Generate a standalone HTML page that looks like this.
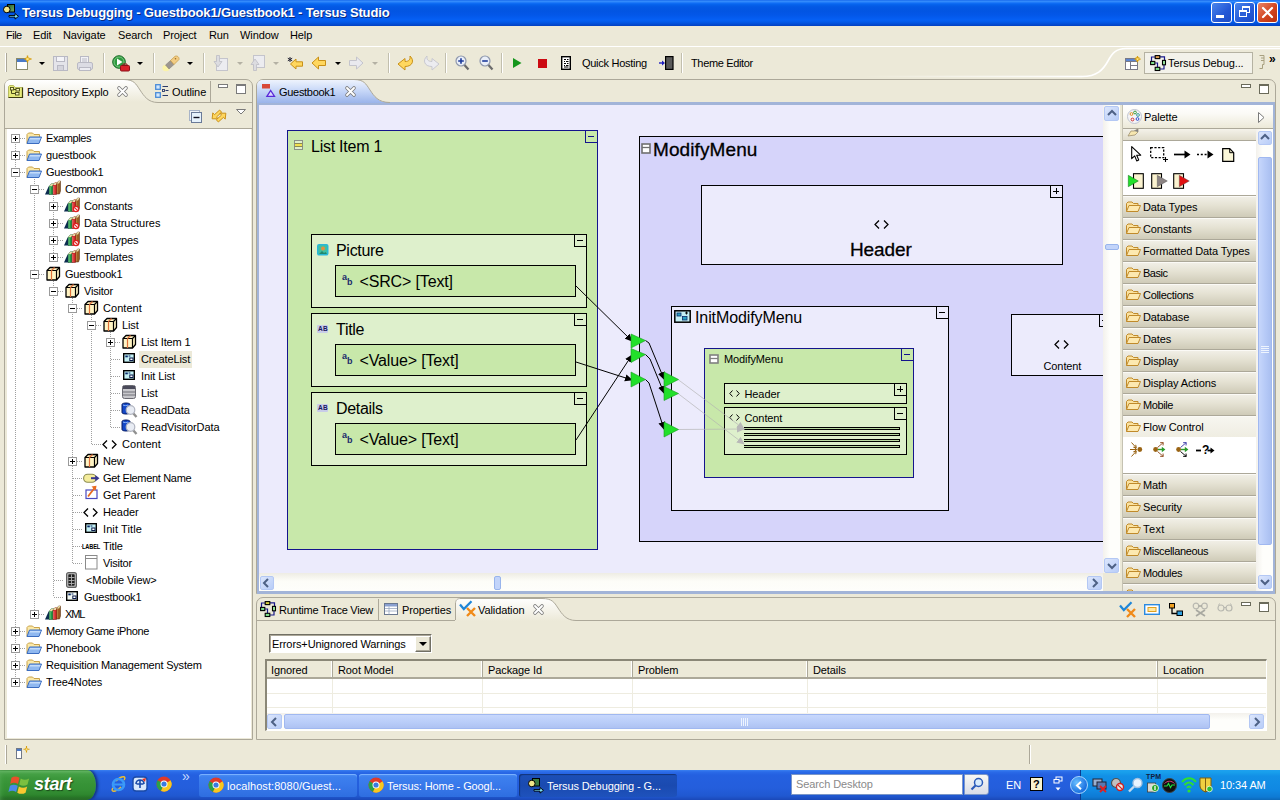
<!DOCTYPE html>
<html><head><meta charset="utf-8"><title>Tersus Debugging - Guestbook1/Guestbook1 - Tersus Studio</title>
<style>
*{box-sizing:border-box;margin:0;padding:0}
html,body{width:1280px;height:800px;overflow:hidden;background:#ece9d8}
body{position:relative;font-family:"Liberation Sans",sans-serif;font-size:11px;color:#000}
.a{position:absolute}
.t{position:absolute;white-space:nowrap;line-height:14px;height:14px;letter-spacing:-.1px}
svg{position:absolute;overflow:visible}
#title{left:0;top:0;width:1280px;height:26px;background:linear-gradient(#0a5ce8 0,#3a90fc 1px,#2a84fa 2px,#1470f6 3px,#0766f0 4px,#0560ea 5px,#0358e4 7px,#0255e2 11px,#0357e8 15px,#045cf0 18px,#0560f4 20px,#045ae8 22px,#034ed6 24px,#0340c0 26px)}
#title .tt{left:22px;top:4px;color:#fff;font-weight:bold;font-size:13px;line-height:18px;height:18px;text-shadow:1px 1px 0 #0a2a80;letter-spacing:-.15px}
.wb{top:2px;width:21px;height:21px;border:1px solid #fff;border-radius:3px;background:linear-gradient(135deg,#4a86ec,#2458d6 60%,#1d4cc4)}
.mi{top:28px;font-size:11px}
.sep{width:2px;height:20px;top:53px;border-left:1px solid #c2bfae;border-right:1px solid #fff}
.dd{width:0;height:0;border-left:3px solid transparent;border-right:3px solid transparent;border-top:3px solid #000;top:62px}
.dd.g{border-top-color:#b4b1a4}
.panel{border:1px solid #aca899;border-radius:7px 7px 0 0;background:#ece9d8}
.row{left:0;height:17px;width:243px}
.row .t{top:2px}
.exp{width:9px;height:9px;border:1px solid #9a9a9a;background:#fff;top:4px}
.exp i{position:absolute;left:1px;top:3px;width:5px;height:1px;background:#000}
.exp b{position:absolute;left:3px;top:1px;width:1px;height:5px;background:#000}
.drawer{left:0;width:133px;height:22px;background:linear-gradient(#f1efe6 0,#e4e1d2 45%,#cfcbb8 100%);border-top:1px solid #fbfaf6;border-bottom:1px solid #aca899}
.drawer .t{left:20px;top:3px}
.th{top:0;height:18px;border-right:1px solid #aca899;border-bottom:2px solid #aca899;background:#ece9d8;box-shadow:inset -1px 0 0 #fff}
.th .t{left:5px;top:2px}
.tb{top:774px;height:23px;border-radius:3px;color:#fff;font-size:11px}
</style></head><body>
<div class="a" id="title"><svg style="left:3px;top:3px" width="18" height="18" viewBox="0 0 18 18"><defs><linearGradient id="agr" x1="0" y1="0" x2="1" y2="1"><stop offset="0" stop-color="#1c5a24"/><stop offset="1" stop-color="#7ab070"/></linearGradient></defs><rect x="4.500" y="1.500" width="7" height="7.500" fill="url(#agr)" stroke="#000" stroke-width="1"/><circle cx="3.800" cy="6.500" r="3.300" fill="#f2e68a" stroke="#000" stroke-width="1"/><path d="M6 12.500h6v-2l3.500 2.800-3.500 2.800v-2h-6z" fill="#7adcf0" stroke="#000" stroke-width=".9"/></svg><div class="t tt">Tersus Debugging - Guestbook1/Guestbook1 - Tersus Studio</div><div class="a wb" style="left:1211px"><div class="a" style="left:4px;top:12px;width:8px;height:3px;background:#fff"></div></div><div class="a wb" style="left:1234px"><div class="a" style="left:7px;top:3px;width:8px;height:7px;border:1px solid #fff;border-top-width:2px"></div><div class="a" style="left:4px;top:7px;width:8px;height:7px;border:1px solid #fff;border-top-width:2px;background:#2c60d8"></div></div><div class="a wb" style="left:1257px;background:linear-gradient(135deg,#e88468,#d2451f 55%,#b8300e)"><svg style="left:3px;top:3px" width="13" height="13" viewBox="0 0 13 13"><path d="M2 2l9 9M11 2l-9 9" stroke="#fff" stroke-width="2.2" stroke-linecap="round"/></svg></div></div><div class="a" style="left:0;top:26px;width:1280px;height:20px;background:#ece9d8"></div><div class="t mi" style="left:6px;letter-spacing:-.5px">File</div><div class="t mi" style="left:33px">Edit</div><div class="t mi" style="left:63px">Navigate</div><div class="t mi" style="left:118px">Search</div><div class="t mi" style="left:163px">Project</div><div class="t mi" style="left:209px">Run</div><div class="t mi" style="left:240px">Window</div><div class="t mi" style="left:290px">Help</div><div class="a" style="left:0;top:46px;width:1280px;height:1px;background:#fff"></div><div class="a" style="left:0;top:47px;width:1280px;height:33px;background:#ece9d8"></div><svg style="left:860px;top:47px" width="420" height="33" viewBox="0 0 420 33"><defs><linearGradient id="fd" x1="0" y1="0" x2="1" y2="0"><stop offset="0" stop-color="#fff" stop-opacity="0"/><stop offset="1" stop-color="#fff"/></linearGradient></defs><rect x="0" y="28.700" width="222" height="1.600" fill="url(#fd)"/><path d="M222 29.500C237 29.500 243 23 248 14C252 6.500 256 1.500 266 1.500H420" fill="none" stroke="#fff" stroke-width="1.600"/></svg><div class="a" style="left:5px;top:53px;width:2px;height:19px;border-left:1px solid #fff;border-right:1px solid #aca899"></div><div class="a sep" style="left:103px"></div><div class="a sep" style="left:153px"></div><div class="a sep" style="left:203px"></div><div class="a sep" style="left:388px"></div><div class="a sep" style="left:445px"></div><div class="a sep" style="left:501px"></div><div class="a sep" style="left:681px"></div><div class="a dd" style="left:39px"></div><div class="a dd" style="left:137px"></div><div class="a dd" style="left:187px"></div><div class="a dd g" style="left:237px"></div><div class="a dd g" style="left:273px"></div><div class="a dd" style="left:335px"></div><div class="a dd g" style="left:372px"></div><svg style="left:15px;top:55px" width="17" height="16" viewBox="0 0 17 16"><rect x="1.5" y="3.5" width="11" height="11" fill="#fff" stroke="#8a8a6a"/><rect x="2" y="4" width="10" height="3" fill="#4a7ac8"/><path d="M12.5 0.5v2.5M12.5 5v2.5M9.5 4h2M14 4h2.5" stroke="#d9a010" stroke-width="1.4"/><rect x="11" y="2.8" width="3" height="2.6" fill="#ffe680" stroke="#d9a010" stroke-width=".6"/></svg><svg style="left:53px;top:56px" width="15" height="15" viewBox="0 0 15 15"><rect x="0.5" y="0.5" width="14" height="14" fill="#e4e4ea" stroke="#b9b9c4"/><rect x="3.5" y="0.5" width="8" height="5" fill="#f4f4f8" stroke="#b9b9c4"/><rect x="4.5" y="9.5" width="6" height="5" fill="#d4d4dc" stroke="#b9b9c4"/></svg><svg style="left:77px;top:56px" width="16" height="15" viewBox="0 0 16 15"><rect x="3.5" y="0.5" width="8" height="7" fill="#f2f2f6" stroke="#b9b9c4"/><path d="M5 3h5M5 5h5" stroke="#b9b9c4"/><rect x="0.5" y="6.500" width="15" height="7" rx="1.5" fill="#dcdce4" stroke="#b9b9c4"/><rect x="2.5" y="11.500" width="11" height="3" fill="#ececf2" stroke="#b9b9c4"/></svg><svg style="left:112px;top:55px" width="18" height="17" viewBox="0 0 18 17"><circle cx="7" cy="7" r="6.3" fill="#2e9a3e" stroke="#1c6a28"/><circle cx="7" cy="7" r="5" fill="none" stroke="#8ad08e" stroke-width=".8"/><path d="M5 3.500 L10.500 7 L5 10.500z" fill="#fff"/><rect x="8.500" y="10.500" width="9" height="5.500" rx="1" fill="#d8202a" stroke="#8c1018"/><path d="M11 10.500v-1.500h4v1.500" fill="none" stroke="#8c1018"/></svg><svg style="left:162px;top:55px" width="19" height="17" viewBox="0 0 19 17"><ellipse cx="4" cy="13" rx="3.600" ry="3.300" fill="#fbf3a8"/><path d="M3.500 10L8.500 5.500L12 9.500L7 14Z" fill="#9c9690" stroke="#7c7670" stroke-width=".5"/><path d="M8.500 5.500L13 1.300C15 .3 17.500 2 17 4.500L12 9.500Z" fill="#f2cc84" stroke="#c49840" stroke-width=".7"/><circle cx="13.500" cy="3.800" r=".8" fill="#a07020"/></svg><svg style="left:213px;top:55px" width="15" height="16" viewBox="0 0 15 16"><rect x="3.500" y="3.500" width="11" height="12" fill="#ececf0" stroke="#c4c4cc"/><path d="M3.500 .5h3v6h2.500l-4 5.500-4-5.500h2.500z" fill="#dcdce0" stroke="#bcbcc4" stroke-width=".8"/></svg><svg style="left:250px;top:55px" width="15" height="16" viewBox="0 0 15 16"><rect x="3.500" y="0.500" width="11" height="12" fill="#ececf0" stroke="#c4c4cc"/><path d="M3.500 15.500h3v-6h2.500l-4-5.500-4 5.500h2.500z" fill="#dcdce0" stroke="#bcbcc4" stroke-width=".8"/></svg><svg style="left:286px;top:56px" width="18" height="14" viewBox="0 0 18 14"><path d="M4 1v5M1.800 2.200l4.400 2.600M6.200 2.200L1.800 4.800" stroke="#223" stroke-width="1"/><path d="M4.500 8 L10 3 V5.800 H16.500 V10.200 H10 V13 Z" fill="#ffd75e" stroke="#c89018" stroke-width="1"/></svg><svg style="left:311px;top:56px" width="16" height="14" viewBox="0 0 16 14"><path d="M1 7 L7.500 1 V4.500 H14.500 V9.500 H7.500 V13 Z" fill="#ffd75e" stroke="#c89018" stroke-width="1"/></svg><svg style="left:348px;top:56px" width="16" height="14" viewBox="0 0 16 14"><path d="M15 7 L8.500 1 V4.500 H1.500 V9.500 H8.500 V13 Z" fill="#e9e9ee" stroke="#c4c4cc" stroke-width="1"/></svg><svg style="left:397px;top:55px" width="18" height="16" viewBox="0 0 18 16"><path d="M1 9 L8 3.500 V6.500 C12 6.500 13.500 4.500 13 1 C17.500 5 16 11.500 8 11.500 V15 Z" fill="#ffd75e" stroke="#c89018" stroke-width="1"/></svg><svg style="left:422px;top:55px" width="18" height="16" viewBox="0 0 18 16"><path d="M17 9 L10 3.500 V6.500 C6 6.500 4.500 4.500 5 1 C.5 5 2 11.500 10 11.500 V15 Z" fill="#ececf0" stroke="#c8c8d0" stroke-width="1"/></svg><svg style="left:455px;top:55px" width="15" height="16" viewBox="0 0 15 16"><path d="M9 9.500 L13.500 14.500" stroke="#6b6b6b" stroke-width="2.200"/><circle cx="6" cy="6" r="5" fill="#e9eef8" stroke="#8f98ac" stroke-width="1.200"/><path d="M3.200 6h5.600M6 3.200v5.600" stroke="#1c3a9a" stroke-width="1.600"/></svg><svg style="left:479px;top:55px" width="15" height="16" viewBox="0 0 15 16"><path d="M9 9.500 L13.500 14.500" stroke="#6b6b6b" stroke-width="2.200"/><circle cx="6" cy="6" r="5" fill="#e9eef8" stroke="#8f98ac" stroke-width="1.200"/><path d="M3.200 6h5.600" stroke="#1c3a9a" stroke-width="1.600"/></svg><svg style="left:513px;top:58px" width="9" height="10" viewBox="0 0 9 10"><path d="M0 0 L8.500 5 L0 10Z" fill="#15961c"/></svg><div class="a" style="left:538px;top:59px;width:9px;height:9px;background:#cc0a12"></div><svg style="left:561px;top:56px" width="10" height="14" viewBox="0 0 10 14"><rect x="0.700" y="0.700" width="8.600" height="12.600" fill="#fff" stroke="#000" stroke-width="1.400"/><path d="M3 3.500h2M6 3.500h1.500M3 5.500h1M5 5.500h2.500M3 7.500h2M6 7.500h1.500M3 9.500h1M5 9.500h2.500M3 11h4.500" stroke="#000" stroke-width="1"/></svg><div class="t" style="left:582px;top:56px;letter-spacing:-.28px">Quick Hosting</div><svg style="left:659px;top:56px" width="15" height="14" viewBox="0 0 15 14"><rect x="6.600" y="0.600" width="7.400" height="12.800" fill="#5a5a5a" stroke="#000" stroke-width="1.200"/><path d="M0 7h4.500" stroke="#2020c0" stroke-width="1.400"/><path d="M3 4.500 L6 7 L3 9.500Z" fill="#2020c0"/></svg><div class="t" style="left:691px;top:56px;letter-spacing:-.35px">Theme Editor</div><svg style="left:1125px;top:56px" width="16" height="14" viewBox="0 0 16 14"><rect x="0.500" y="2.500" width="12" height="11" fill="#fff" stroke="#7a7a86"/><rect x="1" y="3" width="11" height="2" fill="#5a84d0"/><path d="M.5 5.500h12M5.500 5.500v8M5.500 9.500h7" stroke="#7a7a86"/><rect x="11" y="1.600" width="3" height="3" fill="#ffe680" stroke="#d9a010" stroke-width=".6"/><path d="M12.500 0v2.200M12.500 4v2.200M9.500 3.100h2.200M13.400 3.100h2.200" stroke="#d9a010" stroke-width="1.200"/></svg><div class="a" style="left:1144px;top:52px;width:109px;height:22px;border:1px solid #b5b2a2;background:#f3f2ea"></div><svg style="left:1150px;top:55px" width="16" height="16" viewBox="0 0 16 16"><path d="M1.500 6.500V2H5.500M10 1.800H14.500V5.500M4.700 8H7.500V12.500M10 14H14V10" fill="none" stroke="#18188a" stroke-width="1.200"/><rect x="5.200" y="0.600" width="4.600" height="3" fill="#e0a050" stroke="#000" stroke-width="1.100"/><rect x="0.600" y="6.400" width="4.200" height="3.200" fill="#7ee08a" stroke="#000" stroke-width="1.100"/><rect x="12.500" y="5.400" width="3" height="4.400" fill="#9ae8a0" stroke="#000" stroke-width="1.100"/><rect x="5.200" y="12.300" width="4.600" height="3.200" fill="#7ee08a" stroke="#000" stroke-width="1.100"/></svg><div class="t" style="left:1168px;top:56px">Tersus Debug...</div><svg style="left:1259px;top:55px" width="6" height="15" viewBox="0 0 6 15"><path d="M.5 .5h4.500v9h-1.500v4h-3M2 3h3M2 5.500h3" fill="none" stroke="#a8a080" stroke-width="1"/></svg><div class="t" style="left:1269px;top:52px;font-weight:bold;font-size:12px;letter-spacing:-1px">»</div><div class="a panel" style="left:4px;top:79px;width:249px;height:661px"></div><svg style="left:5px;top:80px" width="247" height="23" viewBox="0 0 247 23"><defs><linearGradient id="lg1" x1="0" y1="0" x2="0" y2="1"><stop offset="0" stop-color="#fff"/><stop offset="1" stop-color="#ece9d8"/></linearGradient></defs><path d="M153 22.500H247" stroke="#aca899"/><path d="M0 22V6C0 2 2 0 6 0H119C129 0 131 4 135 10S143 22 153 22H0z" fill="url(#lg1)"/><path d="M119 -.5C129 -.5 131 4 135 10S143 22.500 153 22.500" fill="none" stroke="#aca899"/><path d="M205.500 1V22" stroke="#aca899"/></svg><div class="a" style="left:5px;top:103px;width:247px;height:25px;background:#ece9d8"></div><div class="a" style="left:5px;top:128px;width:247px;height:1px;background:#aca899"></div><svg style="left:8px;top:84px" width="15" height="14" viewBox="0 0 15 14"><path d="M.5 2.500V13.500H14.500V3.500H7L5.500 1.500H1.500z" fill="#e6ea7a" stroke="#b8bc60" stroke-width="1"/><path d="M.5 13.500H14.500V3.500" fill="none" stroke="#3c3c10" stroke-width="1.200"/><path d="M3.500 6V9.500H8M6 5.500H9" stroke="#4a4a18" stroke-width="1" fill="none"/><rect x="2.500" y="3.500" width="3" height="2.500" fill="#f8f8b8" stroke="#4a4a18" stroke-width=".9"/><rect x="8" y="4.500" width="3.500" height="2.500" fill="#f8f8b8" stroke="#4a4a18" stroke-width=".9"/><rect x="7.500" y="8.500" width="3.500" height="2.500" fill="#f8f8b8" stroke="#4a4a18" stroke-width=".9"/></svg><div class="t" style="left:27px;top:85px">Repository Explo</div><svg style="left:117px;top:86px" width="11" height="11" viewBox="0 0 11 11"><path d="M2 2L9 9M9 2L2 9" stroke="#7c7c7c" stroke-width="3.600" stroke-linecap="round"/><path d="M2 2L9 9M9 2L2 9" stroke="#fff" stroke-width="1.900" stroke-linecap="round"/></svg><svg style="left:155px;top:84px" width="14" height="14" viewBox="0 0 14 14"><rect x="0.700" y="0.700" width="4.600" height="4.600" fill="#d4e8fc" stroke="#4a8cd8" stroke-width="1.300"/><rect x="0.700" y="8.700" width="4.600" height="4.600" fill="#d4e8fc" stroke="#4a8cd8" stroke-width="1.300"/><path d="M7.500 2.500h5.500M10.500 6.500h3M7.500 11.500h5.500" stroke="#2a3a68" stroke-width="1.200"/><rect x="7.500" y="5.500" width="2" height="2" fill="none" stroke="#2a3a68" stroke-width=".9"/></svg><div class="t" style="left:172px;top:85px">Outline</div><div class="a" style="left:218px;top:84px;width:10px;height:4px;border:1px solid #7a7a7a;background:#fff"></div><div class="a" style="left:236px;top:84px;width:10px;height:10px;border:1px solid #7a7a7a;border-top-width:2px;background:#fff"></div><svg style="left:189px;top:110px" width="14" height="14" viewBox="0 0 14 14"><rect x="0.500" y="0.500" width="10" height="10" fill="#f0f4f8" stroke="#a8b4c8"/><rect x="2.500" y="2.500" width="10" height="10" fill="#e6f2fc" stroke="#6a7a98"/><path d="M4.500 7.500h6" stroke="#101020" stroke-width="1.400"/></svg><svg style="left:211px;top:108px" width="16" height="16" viewBox="0 0 16 16"><g transform="rotate(-42 8 8)"><path d="M1 5.500L5.500 1.500V4H12.500V7H5.500V9.500Z" fill="#ffd75e" stroke="#c89018" stroke-width=".9"/><path d="M15 10.500L10.500 6.500V9H3.500V12H10.500V14.500Z" fill="#ffd75e" stroke="#c89018" stroke-width=".9"/></g></svg><svg style="left:236px;top:109px" width="10" height="6" viewBox="0 0 10 6"><path d="M.5 .5h9l-4.500 4.500z" fill="#fff" stroke="#7a7a7a" stroke-width="1"/></svg><div class="a" style="left:7px;top:129px;width:244px;height:609px;background:#fff;overflow:hidden"><div class="a" style="left:13px;top:9px;width:6px;height:1px;background:repeating-linear-gradient(90deg,#a0a0a0 0 1px,transparent 1px 2px)"></div><div class="a" style="left:13px;top:26px;width:6px;height:1px;background:repeating-linear-gradient(90deg,#a0a0a0 0 1px,transparent 1px 2px)"></div><div class="a" style="left:13px;top:43px;width:6px;height:1px;background:repeating-linear-gradient(90deg,#a0a0a0 0 1px,transparent 1px 2px)"></div><div class="a" style="left:32px;top:60px;width:6px;height:1px;background:repeating-linear-gradient(90deg,#a0a0a0 0 1px,transparent 1px 2px)"></div><div class="a" style="left:51px;top:77px;width:6px;height:1px;background:repeating-linear-gradient(90deg,#a0a0a0 0 1px,transparent 1px 2px)"></div><div class="a" style="left:51px;top:94px;width:6px;height:1px;background:repeating-linear-gradient(90deg,#a0a0a0 0 1px,transparent 1px 2px)"></div><div class="a" style="left:51px;top:111px;width:6px;height:1px;background:repeating-linear-gradient(90deg,#a0a0a0 0 1px,transparent 1px 2px)"></div><div class="a" style="left:51px;top:128px;width:6px;height:1px;background:repeating-linear-gradient(90deg,#a0a0a0 0 1px,transparent 1px 2px)"></div><div class="a" style="left:32px;top:145px;width:6px;height:1px;background:repeating-linear-gradient(90deg,#a0a0a0 0 1px,transparent 1px 2px)"></div><div class="a" style="left:51px;top:162px;width:6px;height:1px;background:repeating-linear-gradient(90deg,#a0a0a0 0 1px,transparent 1px 2px)"></div><div class="a" style="left:70px;top:179px;width:6px;height:1px;background:repeating-linear-gradient(90deg,#a0a0a0 0 1px,transparent 1px 2px)"></div><div class="a" style="left:89px;top:196px;width:6px;height:1px;background:repeating-linear-gradient(90deg,#a0a0a0 0 1px,transparent 1px 2px)"></div><div class="a" style="left:108px;top:213px;width:6px;height:1px;background:repeating-linear-gradient(90deg,#a0a0a0 0 1px,transparent 1px 2px)"></div><div class="a" style="left:104px;top:230px;width:10px;height:1px;background:repeating-linear-gradient(90deg,#a0a0a0 0 1px,transparent 1px 2px)"></div><div class="a" style="left:104px;top:247px;width:10px;height:1px;background:repeating-linear-gradient(90deg,#a0a0a0 0 1px,transparent 1px 2px)"></div><div class="a" style="left:104px;top:264px;width:10px;height:1px;background:repeating-linear-gradient(90deg,#a0a0a0 0 1px,transparent 1px 2px)"></div><div class="a" style="left:104px;top:281px;width:10px;height:1px;background:repeating-linear-gradient(90deg,#a0a0a0 0 1px,transparent 1px 2px)"></div><div class="a" style="left:104px;top:298px;width:10px;height:1px;background:repeating-linear-gradient(90deg,#a0a0a0 0 1px,transparent 1px 2px)"></div><div class="a" style="left:85px;top:315px;width:10px;height:1px;background:repeating-linear-gradient(90deg,#a0a0a0 0 1px,transparent 1px 2px)"></div><div class="a" style="left:70px;top:332px;width:6px;height:1px;background:repeating-linear-gradient(90deg,#a0a0a0 0 1px,transparent 1px 2px)"></div><div class="a" style="left:66px;top:349px;width:10px;height:1px;background:repeating-linear-gradient(90deg,#a0a0a0 0 1px,transparent 1px 2px)"></div><div class="a" style="left:66px;top:366px;width:10px;height:1px;background:repeating-linear-gradient(90deg,#a0a0a0 0 1px,transparent 1px 2px)"></div><div class="a" style="left:66px;top:383px;width:10px;height:1px;background:repeating-linear-gradient(90deg,#a0a0a0 0 1px,transparent 1px 2px)"></div><div class="a" style="left:66px;top:400px;width:10px;height:1px;background:repeating-linear-gradient(90deg,#a0a0a0 0 1px,transparent 1px 2px)"></div><div class="a" style="left:66px;top:417px;width:10px;height:1px;background:repeating-linear-gradient(90deg,#a0a0a0 0 1px,transparent 1px 2px)"></div><div class="a" style="left:66px;top:434px;width:10px;height:1px;background:repeating-linear-gradient(90deg,#a0a0a0 0 1px,transparent 1px 2px)"></div><div class="a" style="left:47px;top:451px;width:10px;height:1px;background:repeating-linear-gradient(90deg,#a0a0a0 0 1px,transparent 1px 2px)"></div><div class="a" style="left:47px;top:468px;width:10px;height:1px;background:repeating-linear-gradient(90deg,#a0a0a0 0 1px,transparent 1px 2px)"></div><div class="a" style="left:32px;top:485px;width:6px;height:1px;background:repeating-linear-gradient(90deg,#a0a0a0 0 1px,transparent 1px 2px)"></div><div class="a" style="left:13px;top:502px;width:6px;height:1px;background:repeating-linear-gradient(90deg,#a0a0a0 0 1px,transparent 1px 2px)"></div><div class="a" style="left:13px;top:519px;width:6px;height:1px;background:repeating-linear-gradient(90deg,#a0a0a0 0 1px,transparent 1px 2px)"></div><div class="a" style="left:13px;top:536px;width:6px;height:1px;background:repeating-linear-gradient(90deg,#a0a0a0 0 1px,transparent 1px 2px)"></div><div class="a" style="left:13px;top:553px;width:6px;height:1px;background:repeating-linear-gradient(90deg,#a0a0a0 0 1px,transparent 1px 2px)"></div><div class="a" style="left:27px;top:50px;width:1px;height:435px;background:repeating-linear-gradient(#a0a0a0 0 1px,transparent 1px 2px)"></div><div class="a" style="left:46px;top:67px;width:1px;height:61px;background:repeating-linear-gradient(#a0a0a0 0 1px,transparent 1px 2px)"></div><div class="a" style="left:46px;top:152px;width:1px;height:316px;background:repeating-linear-gradient(#a0a0a0 0 1px,transparent 1px 2px)"></div><div class="a" style="left:65px;top:169px;width:1px;height:265px;background:repeating-linear-gradient(#a0a0a0 0 1px,transparent 1px 2px)"></div><div class="a" style="left:84px;top:186px;width:1px;height:129px;background:repeating-linear-gradient(#a0a0a0 0 1px,transparent 1px 2px)"></div><div class="a" style="left:103px;top:203px;width:1px;height:95px;background:repeating-linear-gradient(#a0a0a0 0 1px,transparent 1px 2px)"></div><div class="a" style="left:8px;top:9px;width:1px;height:544px;background:repeating-linear-gradient(#a0a0a0 0 1px,transparent 1px 2px)"></div><div class="a exp" style="left:4px;top:5px"><i></i><b></b></div><svg style="left:19px;top:3px" width="16" height="13" viewBox="0 0 16 13"><path d="M1 11.500V2.500l1.500-1.500h4l1.500 1.500h5.500v3" fill="#fbe9a8" stroke="#c9a24a" stroke-width="1"/><path d="M1 11.500l2.500-6.500h12l-2.500 6.500z" fill="#8fb8f0" stroke="#3a6cc0" stroke-width="1"/><path d="M4 6h10.500l-.5 1.500h-10.500z" fill="#c4dcfa"/></svg><div class="t" style="left:39px;top:2px;letter-spacing:-0.4px">Examples</div><div class="a exp" style="left:4px;top:22px"><i></i><b></b></div><svg style="left:19px;top:20px" width="16" height="13" viewBox="0 0 16 13"><path d="M1 11.500V2.500l1.500-1.500h4l1.500 1.500h5.500v3" fill="#fbe9a8" stroke="#c9a24a" stroke-width="1"/><path d="M1 11.500l2.500-6.500h12l-2.500 6.500z" fill="#8fb8f0" stroke="#3a6cc0" stroke-width="1"/><path d="M4 6h10.500l-.5 1.500h-10.500z" fill="#c4dcfa"/></svg><div class="t" style="left:39px;top:19px">guestbook</div><div class="a exp" style="left:4px;top:39px"><i></i></div><svg style="left:19px;top:37px" width="16" height="13" viewBox="0 0 16 13"><path d="M1 11.500V2.500l1.500-1.500h4l1.500 1.500h5.500v3" fill="#fbe9a8" stroke="#c9a24a" stroke-width="1"/><path d="M1 11.500l2.500-6.500h12l-2.500 6.500z" fill="#8fb8f0" stroke="#3a6cc0" stroke-width="1"/><path d="M4 6h10.500l-.5 1.500h-10.500z" fill="#c4dcfa"/></svg><div class="t" style="left:39px;top:36px;letter-spacing:-0.2px">Guestbook1</div><div class="a exp" style="left:23px;top:56px"><i></i></div><svg style="left:38px;top:51px" width="16" height="16" viewBox="0 0 16 16"><path d="M0 14.500L3.600 6.500L4.800 7V14.500z" fill="#0c2c50"/><path d="M4.300 14.500V6.200L6.300 3.800H8.800V12L7.800 14.500z" fill="#1f9a48" stroke="#0c4a20" stroke-width=".5"/><path d="M5 7V14" stroke="#8ae09a" stroke-width=".8"/><path d="M4.300 6.200L6.300 3.800H8.800L7 6.200z" fill="#e8dca8"/><path d="M8 14.500V5L10 2.600H12.600V11.500L11.500 14.500z" fill="#d42a2a" stroke="#6a0c0c" stroke-width=".5"/><path d="M8.800 5.800V14" stroke="#f49090" stroke-width=".8"/><path d="M8 5L10 2.600H12.600L10.800 5z" fill="#e8dca8"/><path d="M11.800 14V3.500L13.600 1H15.500V11L14.500 14z" fill="#9a5a20" stroke="#4a2406" stroke-width=".5"/><path d="M12.600 4V13.500" stroke="#d09a50" stroke-width=".7"/><path d="M11.800 3.500L13.600 1H15.500L14 3.500z" fill="#e8dca8"/></svg><div class="t" style="left:58px;top:53px;letter-spacing:-0.55px">Common</div><div class="a exp" style="left:42px;top:73px"><i></i><b></b></div><svg style="left:57px;top:68px" width="16" height="16" viewBox="0 0 16 16"><path d="M0 14.500L3.600 6.500L4.800 7V14.500z" fill="#0c2c50"/><path d="M4.300 14.500V6.200L6.300 3.800H8.800V12L7.800 14.500z" fill="#1f9a48" stroke="#0c4a20" stroke-width=".5"/><path d="M5 7V14" stroke="#8ae09a" stroke-width=".8"/><path d="M4.300 6.200L6.300 3.800H8.800L7 6.200z" fill="#e8dca8"/><path d="M8 14.500V5L10 2.600H12.600V11.500L11.500 14.500z" fill="#d42a2a" stroke="#6a0c0c" stroke-width=".5"/><path d="M8.800 5.800V14" stroke="#f49090" stroke-width=".8"/><path d="M8 5L10 2.600H12.600L10.800 5z" fill="#e8dca8"/><path d="M11.800 14V3.500L13.600 1H15.500V11L14.500 14z" fill="#9a5a20" stroke="#4a2406" stroke-width=".5"/><path d="M12.600 4V13.500" stroke="#d09a50" stroke-width=".7"/><path d="M11.800 3.500L13.600 1H15.500L14 3.500z" fill="#e8dca8"/><circle cx="12" cy="12" r="2.600" fill="#fff" stroke="#e02020" stroke-width="1.300"/><path d="M10.300 10.300l3.400 3.400" stroke="#e02020" stroke-width="1.200"/></svg><div class="t" style="left:77px;top:70px">Constants</div><div class="a exp" style="left:42px;top:90px"><i></i><b></b></div><svg style="left:57px;top:85px" width="16" height="16" viewBox="0 0 16 16"><path d="M0 14.500L3.600 6.500L4.800 7V14.500z" fill="#0c2c50"/><path d="M4.300 14.500V6.200L6.300 3.800H8.800V12L7.800 14.500z" fill="#1f9a48" stroke="#0c4a20" stroke-width=".5"/><path d="M5 7V14" stroke="#8ae09a" stroke-width=".8"/><path d="M4.300 6.200L6.300 3.800H8.800L7 6.200z" fill="#e8dca8"/><path d="M8 14.500V5L10 2.600H12.600V11.500L11.500 14.500z" fill="#d42a2a" stroke="#6a0c0c" stroke-width=".5"/><path d="M8.800 5.800V14" stroke="#f49090" stroke-width=".8"/><path d="M8 5L10 2.600H12.600L10.800 5z" fill="#e8dca8"/><path d="M11.800 14V3.500L13.600 1H15.500V11L14.500 14z" fill="#9a5a20" stroke="#4a2406" stroke-width=".5"/><path d="M12.600 4V13.500" stroke="#d09a50" stroke-width=".7"/><path d="M11.800 3.500L13.600 1H15.500L14 3.500z" fill="#e8dca8"/><circle cx="12" cy="12" r="2.600" fill="#fff" stroke="#e02020" stroke-width="1.300"/><path d="M10.300 10.300l3.400 3.400" stroke="#e02020" stroke-width="1.200"/></svg><div class="t" style="left:77px;top:87px;letter-spacing:0px">Data Structures</div><div class="a exp" style="left:42px;top:107px"><i></i><b></b></div><svg style="left:57px;top:102px" width="16" height="16" viewBox="0 0 16 16"><path d="M0 14.500L3.600 6.500L4.800 7V14.500z" fill="#0c2c50"/><path d="M4.300 14.500V6.200L6.300 3.800H8.800V12L7.800 14.500z" fill="#1f9a48" stroke="#0c4a20" stroke-width=".5"/><path d="M5 7V14" stroke="#8ae09a" stroke-width=".8"/><path d="M4.300 6.200L6.300 3.800H8.800L7 6.200z" fill="#e8dca8"/><path d="M8 14.500V5L10 2.600H12.600V11.500L11.500 14.500z" fill="#d42a2a" stroke="#6a0c0c" stroke-width=".5"/><path d="M8.800 5.800V14" stroke="#f49090" stroke-width=".8"/><path d="M8 5L10 2.600H12.600L10.800 5z" fill="#e8dca8"/><path d="M11.800 14V3.500L13.600 1H15.500V11L14.500 14z" fill="#9a5a20" stroke="#4a2406" stroke-width=".5"/><path d="M12.600 4V13.500" stroke="#d09a50" stroke-width=".7"/><path d="M11.800 3.500L13.600 1H15.500L14 3.500z" fill="#e8dca8"/><circle cx="12" cy="12" r="2.600" fill="#fff" stroke="#e02020" stroke-width="1.300"/><path d="M10.300 10.300l3.400 3.400" stroke="#e02020" stroke-width="1.200"/></svg><div class="t" style="left:77px;top:104px">Data Types</div><div class="a exp" style="left:42px;top:124px"><i></i><b></b></div><svg style="left:57px;top:119px" width="16" height="16" viewBox="0 0 16 16"><path d="M0 14.500L3.600 6.500L4.800 7V14.500z" fill="#0c2c50"/><path d="M4.300 14.500V6.200L6.300 3.800H8.800V12L7.800 14.500z" fill="#1f9a48" stroke="#0c4a20" stroke-width=".5"/><path d="M5 7V14" stroke="#8ae09a" stroke-width=".8"/><path d="M4.300 6.200L6.300 3.800H8.800L7 6.200z" fill="#e8dca8"/><path d="M8 14.500V5L10 2.600H12.600V11.500L11.500 14.500z" fill="#d42a2a" stroke="#6a0c0c" stroke-width=".5"/><path d="M8.800 5.800V14" stroke="#f49090" stroke-width=".8"/><path d="M8 5L10 2.600H12.600L10.800 5z" fill="#e8dca8"/><path d="M11.800 14V3.500L13.600 1H15.500V11L14.500 14z" fill="#9a5a20" stroke="#4a2406" stroke-width=".5"/><path d="M12.600 4V13.500" stroke="#d09a50" stroke-width=".7"/><path d="M11.800 3.500L13.600 1H15.500L14 3.500z" fill="#e8dca8"/></svg><div class="t" style="left:77px;top:121px">Templates</div><div class="a exp" style="left:23px;top:141px"><i></i></div><svg style="left:39px;top:137px" width="15" height="15" viewBox="0 0 15 15"><path d="M1 4.500L4 1.500h9.500v9l-3 3.500H1z" fill="#fff4c4" stroke="#000" stroke-width="1.300" stroke-linejoin="round"/><path d="M1 4.500h9.500v9.500M10.500 4.500l3-3" fill="none" stroke="#000" stroke-width="1.200"/><path d="M5.500 4.500v9.500M5.500 4.500l3-3" stroke="#e0703a" stroke-width="1.200" fill="none"/></svg><div class="t" style="left:58px;top:138px;letter-spacing:-0.2px">Guestbook1</div><div class="a exp" style="left:42px;top:158px"><i></i></div><svg style="left:58px;top:154px" width="15" height="15" viewBox="0 0 15 15"><path d="M1 4.500L4 1.500h9.500v9l-3 3.500H1z" fill="#fff4c4" stroke="#000" stroke-width="1.300" stroke-linejoin="round"/><path d="M1 4.500h9.500v9.500M10.500 4.500l3-3" fill="none" stroke="#000" stroke-width="1.200"/><path d="M5.500 4.500v9.500M5.500 4.500l3-3" stroke="#e0703a" stroke-width="1.200" fill="none"/></svg><div class="t" style="left:77px;top:155px;letter-spacing:-0.22px">Visitor</div><div class="a exp" style="left:61px;top:175px"><i></i></div><svg style="left:77px;top:171px" width="15" height="15" viewBox="0 0 15 15"><path d="M1 4.500L4 1.500h9.500v9l-3 3.500H1z" fill="#fff4c4" stroke="#000" stroke-width="1.300" stroke-linejoin="round"/><path d="M1 4.500h9.500v9.500M10.500 4.500l3-3" fill="none" stroke="#000" stroke-width="1.200"/><path d="M5.500 4.500v9.500M5.500 4.500l3-3" stroke="#e0703a" stroke-width="1.200" fill="none"/></svg><div class="t" style="left:96px;top:172px;letter-spacing:0.05px">Content</div><div class="a exp" style="left:80px;top:192px"><i></i></div><svg style="left:96px;top:188px" width="15" height="15" viewBox="0 0 15 15"><path d="M1 4.500L4 1.500h9.500v9l-3 3.500H1z" fill="#fff4c4" stroke="#000" stroke-width="1.300" stroke-linejoin="round"/><path d="M1 4.500h9.500v9.500M10.500 4.500l3-3" fill="none" stroke="#000" stroke-width="1.200"/><path d="M5.500 4.500v9.500M5.500 4.500l3-3" stroke="#e0703a" stroke-width="1.200" fill="none"/></svg><div class="t" style="left:115px;top:189px">List</div><div class="a exp" style="left:99px;top:209px"><i></i><b></b></div><svg style="left:115px;top:205px" width="15" height="15" viewBox="0 0 15 15"><path d="M1 4.500L4 1.500h9.500v9l-3 3.500H1z" fill="#fff4c4" stroke="#000" stroke-width="1.300" stroke-linejoin="round"/><path d="M1 4.500h9.500v9.500M10.500 4.500l3-3" fill="none" stroke="#000" stroke-width="1.200"/><path d="M5.500 4.500v9.500M5.500 4.500l3-3" stroke="#e0703a" stroke-width="1.200" fill="none"/></svg><div class="t" style="left:134px;top:206px">List Item 1</div><div class="a" style="left:132px;top:222px;width:53px;height:17px;background:#ece9d8"></div><svg style="left:116px;top:224px" width="12" height="10" viewBox="0 0 12 10"><rect x="0.700" y="0.700" width="10.600" height="8.600" fill="#c4f0f4" stroke="#000" stroke-width="1.400"/><rect x="2.300" y="2.500" width="2.500" height="1.800" fill="#0a2a6a"/><rect x="5.600" y="2.500" width="1.800" height="1" fill="#0a2a6a"/><rect x="6.800" y="5" width="3.200" height="2.500" fill="#fff" stroke="#0a1a4a" stroke-width="1"/></svg><div class="t" style="left:134px;top:223px">CreateList</div><svg style="left:116px;top:241px" width="12" height="10" viewBox="0 0 12 10"><rect x="0.700" y="0.700" width="10.600" height="8.600" fill="#c4f0f4" stroke="#000" stroke-width="1.400"/><rect x="2.300" y="2.500" width="2.500" height="1.800" fill="#0a2a6a"/><rect x="5.600" y="2.500" width="1.800" height="1" fill="#0a2a6a"/><rect x="6.800" y="5" width="3.200" height="2.500" fill="#fff" stroke="#0a1a4a" stroke-width="1"/></svg><div class="t" style="left:134px;top:240px">Init List</div><svg style="left:115px;top:256px" width="14" height="14" viewBox="0 0 14 14"><rect x="0.500" y="0.500" width="13" height="13" rx="2" fill="#c8c8cc" stroke="#6a6a72"/><rect x="1" y="1" width="12" height="3" fill="#4a4a5a"/><path d="M1 7h12M1 10h12" stroke="#707078" stroke-width="1"/></svg><div class="t" style="left:134px;top:257px">List</div><svg style="left:114px;top:273px" width="16" height="16" viewBox="0 0 16 16"><path d="M1 2.500c0-2 8-2 8 0v8c0 2-8 2-8 0z" fill="#1448c8" stroke="#061a60" stroke-width="1"/><path d="M2 3c1 .8 4 .8 5 0" stroke="#8ab4f8" fill="none"/><path d="M12 11l3.500 4" stroke="#909090" stroke-width="2.400"/><circle cx="9.500" cy="8" r="4.300" fill="#e8ecf4" stroke="#b0b4c0" stroke-width="1.200"/></svg><div class="t" style="left:134px;top:274px">ReadData</div><svg style="left:114px;top:290px" width="16" height="16" viewBox="0 0 16 16"><path d="M1 2.500c0-2 8-2 8 0v8c0 2-8 2-8 0z" fill="#1448c8" stroke="#061a60" stroke-width="1"/><path d="M2 3c1 .8 4 .8 5 0" stroke="#8ab4f8" fill="none"/><path d="M12 11l3.500 4" stroke="#909090" stroke-width="2.400"/><circle cx="9.500" cy="8" r="4.300" fill="#e8ecf4" stroke="#b0b4c0" stroke-width="1.200"/></svg><div class="t" style="left:134px;top:291px">ReadVisitorData</div><svg style="left:95px;top:311px" width="15" height="10" viewBox="0 0 15 10"><path d="M5 .5L1 4.500l4 4M10 .5l4 4-4 4" fill="none" stroke="#000" stroke-width="1.300"/></svg><div class="t" style="left:115px;top:308px;letter-spacing:0.05px">Content</div><div class="a exp" style="left:61px;top:328px"><i></i><b></b></div><svg style="left:77px;top:324px" width="15" height="15" viewBox="0 0 15 15"><path d="M1 4.500L4 1.500h9.500v9l-3 3.500H1z" fill="#fff4c4" stroke="#000" stroke-width="1.300" stroke-linejoin="round"/><path d="M1 4.500h9.500v9.500M10.500 4.500l3-3" fill="none" stroke="#000" stroke-width="1.200"/><path d="M5.500 4.500v9.500M5.500 4.500l3-3" stroke="#e0703a" stroke-width="1.200" fill="none"/></svg><div class="t" style="left:96px;top:325px">New</div><svg style="left:76px;top:344px" width="17" height="11" viewBox="0 0 17 11"><rect x="0.600" y="1.200" width="12.500" height="8" rx="4" fill="#f4ec9c" stroke="#8c8c50" stroke-width="1.100"/><path d="M8 5.200h5" stroke="#383890" stroke-width="2"/><path d="M12.300 2l4.200 3.200-4.200 3.200z" fill="#383890"/></svg><div class="t" style="left:96px;top:342px;letter-spacing:-0.33px">Get Element Name</div><svg style="left:77.5px;top:356px" width="14" height="15" viewBox="0 0 14 15"><rect x="1" y="5" width="11" height="8.500" fill="#fff" stroke="#4848c0" stroke-width="1.200"/><path d="M3 11.500L9.500 3" stroke="#e86a20" stroke-width="1.800"/><path d="M6.500 1.500l5-.8-.8 5z" fill="#e86a20"/></svg><div class="t" style="left:96px;top:359px">Get Parent</div><svg style="left:76px;top:379px" width="15" height="10" viewBox="0 0 15 10"><path d="M5 .5L1 4.500l4 4M10 .5l4 4-4 4" fill="none" stroke="#000" stroke-width="1.300"/></svg><div class="t" style="left:96px;top:376px">Header</div><svg style="left:78px;top:394px" width="12" height="10" viewBox="0 0 12 10"><rect x="0.700" y="0.700" width="10.600" height="8.600" fill="#c4f0f4" stroke="#000" stroke-width="1.400"/><rect x="2.300" y="2.500" width="2.500" height="1.800" fill="#0a2a6a"/><rect x="5.600" y="2.500" width="1.800" height="1" fill="#0a2a6a"/><rect x="6.800" y="5" width="3.200" height="2.500" fill="#fff" stroke="#0a1a4a" stroke-width="1"/></svg><div class="t" style="left:96px;top:393px;letter-spacing:0.1px">Init Title</div><div class="t" style="left:75px;top:413px;font-size:5.600px;font-weight:bold;letter-spacing:-.1px;line-height:8px;height:8px;transform:scaleY(1.250);transform-origin:0 50%">LABEL</div><div class="t" style="left:96px;top:410px">Title</div><svg style="left:78px;top:426px" width="13" height="15" viewBox="0 0 13 15"><rect x="0.500" y="0.500" width="11.500" height="13.500" fill="#fff" stroke="#8a8a8a" stroke-width="1"/><path d="M.5 3.500h11.500" stroke="#8a8a8a"/></svg><div class="t" style="left:96px;top:427px;letter-spacing:-0.22px">Visitor</div><svg style="left:59px;top:443px" width="11" height="16" viewBox="0 0 11 16"><rect x="0.600" y="0.600" width="9.800" height="14.800" rx="2" fill="#c0c0c0" stroke="#606060" stroke-width="1.200"/><rect x="2.300" y="2.300" width="6.400" height="11.400" rx=".8" fill="#202020"/><path d="M2.500 5.500h6M2.500 8.500h6M2.500 11.500h6M5.500 2.500v11" stroke="#b0b0b0" stroke-width=".9"/></svg><div class="t" style="left:79px;top:444px">&lt;Mobile View&gt;</div><svg style="left:59px;top:462px" width="12" height="10" viewBox="0 0 12 10"><rect x="0.700" y="0.700" width="10.600" height="8.600" fill="#f4faf4" stroke="#000" stroke-width="1.400"/><rect x="2.300" y="2.500" width="2.500" height="1.800" fill="#0a2a6a"/><rect x="5.600" y="2.500" width="1.800" height="1" fill="#0a2a6a"/><rect x="6.800" y="5" width="3.200" height="2.500" fill="#fff" stroke="#0a1a4a" stroke-width="1"/></svg><div class="t" style="left:77px;top:461px;letter-spacing:-0.2px">Guestbook1</div><div class="a exp" style="left:23px;top:481px"><i></i><b></b></div><svg style="left:38px;top:476px" width="16" height="16" viewBox="0 0 16 16"><path d="M0 14.500L3.600 6.500L4.800 7V14.500z" fill="#0c2c50"/><path d="M4.300 14.500V6.200L6.300 3.800H8.800V12L7.800 14.500z" fill="#1f9a48" stroke="#0c4a20" stroke-width=".5"/><path d="M5 7V14" stroke="#8ae09a" stroke-width=".8"/><path d="M4.300 6.200L6.300 3.800H8.800L7 6.200z" fill="#e8dca8"/><path d="M8 14.500V5L10 2.600H12.600V11.500L11.500 14.500z" fill="#d42a2a" stroke="#6a0c0c" stroke-width=".5"/><path d="M8.800 5.800V14" stroke="#f49090" stroke-width=".8"/><path d="M8 5L10 2.600H12.600L10.800 5z" fill="#e8dca8"/><path d="M11.800 14V3.500L13.600 1H15.500V11L14.500 14z" fill="#9a5a20" stroke="#4a2406" stroke-width=".5"/><path d="M12.600 4V13.500" stroke="#d09a50" stroke-width=".7"/><path d="M11.800 3.500L13.600 1H15.500L14 3.500z" fill="#e8dca8"/></svg><div class="t" style="left:58px;top:478px;letter-spacing:-1.1px">XML</div><div class="a exp" style="left:4px;top:498px"><i></i><b></b></div><svg style="left:19px;top:496px" width="16" height="13" viewBox="0 0 16 13"><path d="M1 11.500V2.500l1.500-1.500h4l1.500 1.500h5.500v3" fill="#fbe9a8" stroke="#c9a24a" stroke-width="1"/><path d="M1 11.500l2.500-6.500h12l-2.500 6.500z" fill="#8fb8f0" stroke="#3a6cc0" stroke-width="1"/><path d="M4 6h10.500l-.5 1.500h-10.500z" fill="#c4dcfa"/></svg><div class="t" style="left:39px;top:495px;letter-spacing:-0.4px">Memory Game iPhone</div><div class="a exp" style="left:4px;top:515px"><i></i><b></b></div><svg style="left:19px;top:513px" width="16" height="13" viewBox="0 0 16 13"><path d="M1 11.500V2.500l1.500-1.500h4l1.500 1.500h5.500v3" fill="#fbe9a8" stroke="#c9a24a" stroke-width="1"/><path d="M1 11.500l2.500-6.500h12l-2.500 6.500z" fill="#8fb8f0" stroke="#3a6cc0" stroke-width="1"/><path d="M4 6h10.500l-.5 1.500h-10.500z" fill="#c4dcfa"/></svg><div class="t" style="left:39px;top:512px">Phonebook</div><div class="a exp" style="left:4px;top:532px"><i></i><b></b></div><svg style="left:19px;top:530px" width="16" height="13" viewBox="0 0 16 13"><path d="M1 11.500V2.500l1.500-1.500h4l1.500 1.500h5.500v3" fill="#fbe9a8" stroke="#c9a24a" stroke-width="1"/><path d="M1 11.500l2.500-6.500h12l-2.500 6.500z" fill="#8fb8f0" stroke="#3a6cc0" stroke-width="1"/><path d="M4 6h10.500l-.5 1.500h-10.500z" fill="#c4dcfa"/></svg><div class="t" style="left:39px;top:529px;letter-spacing:-0.2px">Requisition Management System</div><div class="a exp" style="left:4px;top:549px"><i></i><b></b></div><svg style="left:19px;top:547px" width="16" height="13" viewBox="0 0 16 13"><path d="M1 11.500V2.500l1.500-1.500h4l1.500 1.500h5.500v3" fill="#fbe9a8" stroke="#c9a24a" stroke-width="1"/><path d="M1 11.500l2.500-6.500h12l-2.500 6.500z" fill="#8fb8f0" stroke="#3a6cc0" stroke-width="1"/><path d="M4 6h10.500l-.5 1.500h-10.500z" fill="#c4dcfa"/></svg><div class="t" style="left:39px;top:546px">Tree4Notes</div></div><div class="a" style="left:256px;top:79px;width:1020px;height:515px;border:1px solid #aca899;border-radius:7px 7px 0 0;background:#ece9d8"></div><div class="a" style="left:257px;top:102px;width:1018px;height:492px;border:2px solid #a2b4d8;border-top-width:3px;border-bottom-width:3px;background:#ece9d8"></div><svg style="left:257px;top:80px" width="140" height="23" viewBox="0 0 140 23"><defs><linearGradient id="tg" x1="0" y1="0" x2="0" y2="1"><stop offset="0" stop-color="#eef3fd"/><stop offset=".5" stop-color="#c4d5f7"/><stop offset="1" stop-color="#9bb4ea"/></linearGradient></defs><path d="M0 23V6C0 2 2 0 6 0H97C107 0 109 4 113 10S121 23 133 23z" fill="url(#tg)"/><path d="M97 -.5C107 -.5 109 4 113 10S121 22.500 133 22.500" fill="none" stroke="#aca899"/></svg><svg style="left:262px;top:84px" width="14" height="13" viewBox="0 0 14 13"><rect x="0" y="0" width="8" height="4.500" fill="#d84838"/><path d="M8.700 6.500L12.500 12.300H4.900z" fill="#dcd8ff" stroke="#5a28d8" stroke-width="1.300"/></svg><div class="t" style="left:279px;top:85px;letter-spacing:-.3px">Guestbook1</div><svg style="left:345px;top:86px" width="11" height="11" viewBox="0 0 11 11"><path d="M2 2L9 9M9 2L2 9" stroke="#7c7c7c" stroke-width="3.600" stroke-linecap="round"/><path d="M2 2L9 9M9 2L2 9" stroke="#fff" stroke-width="1.900" stroke-linecap="round"/></svg><div class="a" style="left:1241px;top:84px;width:10px;height:4px;border:1px solid #6a6a5a;background:#fff"></div><div class="a" style="left:1259px;top:84px;width:10px;height:10px;border:1px solid #6a6a5a;border-top-width:2px;background:#fff"></div><div class="a" style="left:259px;top:105px;width:844px;height:468px;background:#ecebfc;overflow:hidden"><div class="a" style="left:-259px;top:-105px;width:0;height:0"><div class="a" style="left:287px;top:130px;width:311px;height:420px;background:#c8e8aa;border:1px solid #14148c;"></div><div class="a" style="left:585px;top:130px;width:13px;height:13px;border:1px solid #14148c;background:transparent"><div class="a" style="left:2px;top:5px;width:6px;height:1px;background:#14148c"></div></div><svg style="left:294px;top:140px" width="9" height="10" viewBox="0 0 9 10"><rect x="0.500" y="0.500" width="8" height="9" fill="#e0f0cc" stroke="#8a9088"/><rect x="1" y="3.500" width="7" height="3" fill="#f2e050"/><path d="M.5 3.500h8M.5 6.500h8" stroke="#8a8a50"/></svg><div class="t" style="left:311px;top:135.956px;font-size:16px;line-height:21px;height:21px;letter-spacing:-.25px">List Item 1</div><div class="a" style="left:311px;top:234px;width:276px;height:74px;background:#def0cc;border:1px solid #000;"></div><div class="a" style="left:574px;top:234px;width:13px;height:13px;border:1px solid #000;background:transparent"><div class="a" style="left:2px;top:5px;width:6px;height:1px;background:#000"></div></div><svg style="left:317px;top:244px" width="12" height="12" viewBox="0 0 12 12"><rect x="0" y="0" width="11.500" height="11.500" rx="2" fill="#28b8d8"/><rect x="1.500" y="1.500" width="8.500" height="8.500" fill="#40c0a0"/><circle cx="6" cy="4.500" r="2" fill="#e09040"/><path d="M2 10l3-3 2 2 1.500-1 1.500 2z" fill="#208870"/></svg><div class="t" style="left:336px;top:239.956px;font-size:16px;line-height:21px;height:21px;letter-spacing:-.3px">Picture</div><div class="a" style="left:335px;top:265px;width:241px;height:32px;background:#c8e8aa;border:1px solid #000;"></div><div class="t" style="left:342px;top:272px;font-size:9px;line-height:10px;height:10px;color:#1a2a6a;font-weight:bold">a</div><div class="t" style="left:347px;top:277px;font-size:9px;line-height:10px;height:10px;color:#1a2a6a;font-weight:bold">b</div><div class="t" style="left:359.5px;top:270.956px;font-size:16px;line-height:21px;height:21px;letter-spacing:-.15px">&lt;SRC&gt; [Text]</div><div class="a" style="left:311px;top:313px;width:276px;height:74px;background:#def0cc;border:1px solid #000;"></div><div class="a" style="left:574px;top:313px;width:13px;height:13px;border:1px solid #000;background:transparent"><div class="a" style="left:2px;top:5px;width:6px;height:1px;background:#000"></div></div><div class="a" style="left:317px;top:325px;width:11px;height:8px;background:#c8cce8;border-radius:1px"></div><div class="t" style="left:318px;top:325px;font-size:6.500px;line-height:8px;height:8px;font-weight:bold;color:#181860;letter-spacing:.3px">AB</div><div class="t" style="left:336px;top:318.956px;font-size:16px;line-height:21px;height:21px;letter-spacing:-.3px">Title</div><div class="a" style="left:335px;top:344px;width:241px;height:32px;background:#c8e8aa;border:1px solid #000;"></div><div class="t" style="left:342px;top:351px;font-size:9px;line-height:10px;height:10px;color:#1a2a6a;font-weight:bold">a</div><div class="t" style="left:347px;top:356px;font-size:9px;line-height:10px;height:10px;color:#1a2a6a;font-weight:bold">b</div><div class="t" style="left:359.5px;top:349.956px;font-size:16px;line-height:21px;height:21px;letter-spacing:-.15px">&lt;Value&gt; [Text]</div><div class="a" style="left:311px;top:392px;width:276px;height:74px;background:#def0cc;border:1px solid #000;"></div><div class="a" style="left:574px;top:392px;width:13px;height:13px;border:1px solid #000;background:transparent"><div class="a" style="left:2px;top:5px;width:6px;height:1px;background:#000"></div></div><div class="a" style="left:317px;top:404px;width:11px;height:8px;background:#c8cce8;border-radius:1px"></div><div class="t" style="left:318px;top:404px;font-size:6.500px;line-height:8px;height:8px;font-weight:bold;color:#181860;letter-spacing:.3px">AB</div><div class="t" style="left:336px;top:397.956px;font-size:16px;line-height:21px;height:21px;letter-spacing:-.3px">Details</div><div class="a" style="left:335px;top:423px;width:241px;height:32px;background:#c8e8aa;border:1px solid #000;"></div><div class="t" style="left:342px;top:430px;font-size:9px;line-height:10px;height:10px;color:#1a2a6a;font-weight:bold">a</div><div class="t" style="left:347px;top:435px;font-size:9px;line-height:10px;height:10px;color:#1a2a6a;font-weight:bold">b</div><div class="t" style="left:359.5px;top:428.956px;font-size:16px;line-height:21px;height:21px;letter-spacing:-.15px">&lt;Value&gt; [Text]</div><div class="a" style="left:639px;top:136px;width:480px;height:406px;background:#d6d4fa;border:1px solid #000;"></div><svg style="left:641px;top:143px" width="10" height="11" viewBox="0 0 10 11"><rect x="1" y="1" width="8" height="9" fill="#fff" stroke="#707070" stroke-width="1.600"/><path d="M1 4.500h8" stroke="#707070" stroke-width="1.300"/></svg><div class="t" style="left:653px;top:138.417px;font-size:19px;line-height:24px;height:24px;-webkit-text-stroke:.3px #000;letter-spacing:.1px">ModifyMenu</div><div class="a" style="left:701px;top:185px;width:362px;height:80px;background:#ecebfc;border:1px solid #000;"></div><div class="a" style="left:1050px;top:185px;width:13px;height:13px;border:1px solid #000;background:transparent"><div class="a" style="left:2px;top:5px;width:6px;height:1px;background:#000"></div><div class="a" style="left:5px;top:2px;width:1px;height:6px;background:#000"></div></div><svg style="left:874px;top:220px" width="15" height="10" viewBox="0 0 15 10"><path d="M5 .5L1 4.500l4 4M10 .5l4 4-4 4" fill="none" stroke="#000" stroke-width="1.250"/></svg><div class="t" style="left:850px;top:237.917px;font-size:19px;line-height:24px;height:24px;-webkit-text-stroke:.3px #000">Header</div><div class="a" style="left:671px;top:306px;width:278px;height:205px;background:#ecebfc;border:1px solid #000;"></div><div class="a" style="left:936px;top:306px;width:13px;height:13px;border:1px solid #000;background:transparent"><div class="a" style="left:2px;top:5px;width:6px;height:1px;background:#000"></div></div><svg style="left:674px;top:310px" width="17" height="13" viewBox="0 0 17 13"><rect x="0.800" y="0.800" width="15.400" height="11.400" fill="#c4f0f4" stroke="#000" stroke-width="1.500"/><rect x="3" y="3" width="4" height="3" fill="#2aa0c0" stroke="#0a2a6a" stroke-width=".8"/><rect x="8.500" y="6.500" width="4.500" height="3.500" fill="#2aa0c0" stroke="#0a2a6a" stroke-width=".8"/><path d="M12.500 1.500v3M11 3h3" stroke="#000" stroke-width=".9"/></svg><div class="t" style="left:695px;top:306.956px;font-size:16px;line-height:21px;height:21px;">InitModifyMenu</div><div class="a" style="left:704px;top:348px;width:210px;height:130px;background:#c8e8aa;border:1px solid #14148c;"></div><div class="a" style="left:901px;top:348px;width:13px;height:13px;border:1px solid #14148c;background:transparent"><div class="a" style="left:2px;top:5px;width:6px;height:1px;background:#14148c"></div></div><svg style="left:709px;top:354px" width="10" height="10" viewBox="0 0 10 10"><rect x="1" y="1" width="8" height="8" fill="#fff" stroke="#808080" stroke-width="1.600"/><path d="M1 4.500h8" stroke="#808080" stroke-width="1.300"/></svg><div class="t" style="left:724px;top:351.688px;font-size:11px;line-height:15px;height:15px;letter-spacing:-.1px">ModifyMenu</div><div class="a" style="left:724px;top:383px;width:183px;height:21px;background:#def0cc;border:1px solid #000;"></div><div class="a" style="left:894px;top:383px;width:13px;height:13px;border:1px solid #000;background:transparent"><div class="a" style="left:2px;top:5px;width:6px;height:1px;background:#000"></div><div class="a" style="left:5px;top:2px;width:1px;height:6px;background:#000"></div></div><svg style="left:729px;top:390px" width="11" height="7" viewBox="0 0 11 7"><path d="M3.500 .5L.8 3.500l2.700 3M7.500 .5l2.700 3-2.700 3" fill="none" stroke="#000" stroke-width="1"/></svg><div class="t" style="left:744.5px;top:387.188px;font-size:11px;line-height:15px;height:15px;">Header</div><div class="a" style="left:724px;top:407px;width:183px;height:48px;background:#def0cc;border:1px solid #000;"></div><div class="a" style="left:894px;top:407px;width:13px;height:13px;border:1px solid #000;background:transparent"><div class="a" style="left:2px;top:5px;width:6px;height:1px;background:#000"></div></div><svg style="left:729px;top:414px" width="11" height="7" viewBox="0 0 11 7"><path d="M3.500 .5L.8 3.500l2.700 3M7.500 .5l2.700 3-2.700 3" fill="none" stroke="#000" stroke-width="1"/></svg><div class="t" style="left:744.5px;top:411.188px;font-size:11px;line-height:15px;height:15px;">Content</div><div class="a" style="left:744px;top:427px;width:156px;height:3px;border:1px solid #000;border-left:none;background:#b8d8a0"></div><div class="a" style="left:744px;top:433px;width:156px;height:3px;border:1px solid #000;border-left:none;background:#b8d8a0"></div><div class="a" style="left:744px;top:439px;width:156px;height:3px;border:1px solid #000;border-left:none;background:#b8d8a0"></div><div class="a" style="left:744px;top:445px;width:156px;height:3px;border:1px solid #000;border-left:none;background:#b8d8a0"></div><div class="a" style="left:1011px;top:314px;width:120px;height:62px;background:#ecebfc;border:1px solid #000;"></div><div class="a" style="left:1099px;top:314px;width:13px;height:13px;border:1px solid #000;background:transparent"><div class="a" style="left:2px;top:5px;width:6px;height:1px;background:#000"></div><div class="a" style="left:5px;top:2px;width:1px;height:6px;background:#000"></div></div><svg style="left:1054px;top:340px" width="15" height="10" viewBox="0 0 15 10"><path d="M5 .5L1 4.500l4 4M10 .5l4 4-4 4" fill="none" stroke="#000" stroke-width="1.250"/></svg><div class="t" style="left:1043.5px;top:358.688px;font-size:11px;line-height:15px;height:15px;">Content</div><svg style="left:0;top:0" width="1280" height="800" viewBox="0 0 1280 800"><defs><marker id="ah" markerWidth="8" markerHeight="8" refX="7" refY="4" orient="auto" markerUnits="userSpaceOnUse"><path d="M0 .5L8 4L0 7.500z" fill="#000"/></marker><marker id="ag" markerWidth="8" markerHeight="8" refX="7" refY="4" orient="auto" markerUnits="userSpaceOnUse"><path d="M0 .5L8 4L0 7.500z" fill="#b8b8b8"/></marker></defs><g fill="none" stroke="#b0b0b0" stroke-opacity=".65" stroke-width="1"><path d="M678 379.500L744 429" marker-end="url(#ag)"/><path d="M678 393.500L744 444" marker-end="url(#ag)"/><path d="M678 429.500L744 429" marker-end="url(#ag)"/></g><g fill="none" stroke="#000" stroke-width="1"><path d="M576 286L632 341" marker-end="url(#ah)"/><path d="M576 362L632 380" marker-end="url(#ah)"/><path d="M576 440L632 355" marker-end="url(#ah)"/><path d="M645.500 340.500L649 343L664 379" marker-end="url(#ah)"/><path d="M645.500 354.500L650 359L664 393" marker-end="url(#ah)"/><path d="M645.500 379.500L649 383L664 429" marker-end="url(#ah)"/></g><path d="M631 334L645.5 340.5L631 348z" fill="#22e02a" stroke="#1a9a20" stroke-width=".6"/><path d="M631 348.5L645.5 354.5L631 362.5z" fill="#22e02a" stroke="#1a9a20" stroke-width=".6"/><path d="M631 372L645.5 379.5L631 387z" fill="#22e02a" stroke="#1a9a20" stroke-width=".6"/><path d="M664 372L678.5 379.5L664 387z" fill="#22e02a" stroke="#1a9a20" stroke-width=".6"/><path d="M664 386.5L678.5 393.5L664 400.5z" fill="#22e02a" stroke="#1a9a20" stroke-width=".6"/><path d="M664 422L678.5 429.5L664 437z" fill="#22e02a" stroke="#1a9a20" stroke-width=".6"/></svg></div></div><div class="a" style="left:1103px;top:105px;width:17px;height:468px;background:linear-gradient(90deg,#f3f1ec,#fefefb 40%,#fefefb)"></div><div class="a" style="left:1104px;top:106px;width:15px;height:15px;border:1px solid #b4c8f4;border-radius:2px;background:linear-gradient(135deg,#dce6fc,#b8cdf8)"></div><svg style="left:1103.5px;top:105.5px" width="16" height="16" viewBox="0 0 16 16"><path d="M4 9l4-4 4 4" fill="none" stroke="#4d6185" stroke-width="2"/></svg><div class="a" style="left:1104px;top:558px;width:15px;height:15px;border:1px solid #b4c8f4;border-radius:2px;background:linear-gradient(135deg,#dce6fc,#b8cdf8)"></div><svg style="left:1103.5px;top:557.5px" width="16" height="16" viewBox="0 0 16 16"><path d="M4 6l4 4 4-4" fill="none" stroke="#4d6185" stroke-width="2"/></svg><div class="a" style="left:1105px;top:244px;width:14px;height:6px;border:1px solid #98b4ec;border-radius:2px;background:#c2d4fa"></div><div class="a" style="left:259px;top:573px;width:844px;height:18px;background:linear-gradient(#eeece4,#fdfdf8 45%,#fefefb)"></div><div class="a" style="left:1103px;top:573px;width:17px;height:18px;background:#ece9d8"></div><div class="a" style="left:260px;top:576px;width:14px;height:14px;border:1px solid #b4c8f4;border-radius:2px;background:linear-gradient(135deg,#dce6fc,#b8cdf8)"></div><svg style="left:259px;top:575px" width="16" height="16" viewBox="0 0 16 16"><path d="M9 4l-4 4 4 4" fill="none" stroke="#4d6185" stroke-width="2"/></svg><div class="a" style="left:1087px;top:576px;width:15px;height:14px;border:1px solid #b4c8f4;border-radius:2px;background:linear-gradient(135deg,#dce6fc,#b8cdf8)"></div><svg style="left:1086.5px;top:575px" width="16" height="16" viewBox="0 0 16 16"><path d="M6 4l4 4-4 4" fill="none" stroke="#4d6185" stroke-width="2"/></svg><div class="a" style="left:494px;top:576px;width:7px;height:14px;border:1px solid #98b4ec;border-radius:2px;background:#c2d4fa"></div><div class="a" style="left:1120px;top:105px;width:3px;height:486px;background:#ece9d8"></div><div class="a" style="left:1123px;top:105px;width:150px;height:486px;background:#fff;overflow:hidden"><div class="a" style="left:0;top:-1px;width:150px;height:487px"><div class="a" style="left:0;top:0;width:150px;height:25px;background:linear-gradient(#fff,#fbfaf6 40%,#ece9d8);border-bottom:1px solid #aca899"></div><svg style="left:4px;top:5px" width="15" height="15" viewBox="0 0 15 15"><circle cx="7.500" cy="7.500" r="7" fill="#f4f4f8" stroke="#c0c4d0" stroke-width="1"/><circle cx="4.500" cy="5" r="1.400" fill="none" stroke="#e09020" stroke-width="1"/><circle cx="8" cy="3.500" r="1.400" fill="none" stroke="#40a040" stroke-width="1"/><circle cx="11" cy="6" r="1.400" fill="none" stroke="#40a0a0" stroke-width="1"/><circle cx="10.500" cy="10" r="1.400" fill="none" stroke="#3050d0" stroke-width="1"/><circle cx="5.500" cy="10.500" r="1.400" fill="none" stroke="#d03030" stroke-width="1"/></svg><div class="t" style="left:21px;top:6px">Palette</div><svg style="left:135px;top:8px" width="7" height="11" viewBox="0 0 7 11"><path d="M.5 .5L6 5.500L.5 10.500z" fill="#fff" stroke="#7a7a7a" stroke-width="1"/></svg><div class="a" style="left:0;top:25px;width:133px;height:11px;background:linear-gradient(#f4f2ea,#e0dccb)"></div><div class="a" style="left:0;top:36px;width:133px;height:1px;background:#aca899"></div><svg style="left:4px;top:25px" width="12" height="8" viewBox="0 0 12 8"><path d="M1 7l3-5 3 0 4 -2v3l-3 3z" fill="#f7e7b0" stroke="#a09070" stroke-width=".8"/><path d="M7 2l4-2v3z" fill="#808080"/></svg><svg style="left:8px;top:42px" width="11" height="16" viewBox="0 0 11 16"><path d="M.7 .7v12l3-2.800 2 5 2-1-2-4.700h4z" fill="#fff" stroke="#000" stroke-width="1.100" stroke-linejoin="round"/></svg><svg style="left:27px;top:43px" width="19" height="15" viewBox="0 0 19 15"><rect x="0.700" y="0.700" width="13" height="10" fill="none" stroke="#000" stroke-width="1.300" stroke-dasharray="2.200 1.500"/><path d="M15.500 10v5M13 12.500h5" stroke="#000" stroke-width="1.100"/></svg><svg style="left:51px;top:46px" width="17" height="9" viewBox="0 0 17 9"><path d="M0 4.500h11" stroke="#000" stroke-width="1.700"/><path d="M10.500 .5l6 4-6 4z" fill="#000"/></svg><svg style="left:74px;top:46px" width="17" height="9" viewBox="0 0 17 9"><path d="M0 4.500h11" stroke="#000" stroke-width="1.700" stroke-dasharray="2 1.800"/><path d="M10.500 .5l6 4-6 4z" fill="#000"/></svg><svg style="left:99px;top:44px" width="13" height="14" viewBox="0 0 13 14"><path d="M.7 .7h7l4 4v8.600h-11z" fill="#fbf7d8" stroke="#000" stroke-width="1.200"/><path d="M7.700 .7v4h4" fill="none" stroke="#000" stroke-width="1"/></svg><svg style="left:5px;top:69px" width="16" height="16" viewBox="0 0 16 16"><rect x="5.500" y="0.700" width="9.800" height="14.600" fill="#fbf3d0" stroke="#000" stroke-width="1.100"/><path d="M.3 2.300L10.300 8L.3 13.700z" fill="#22e02a" stroke="#0a6a10" stroke-width=".5"/></svg><svg style="left:27.5px;top:69px" width="17" height="16" viewBox="0 0 17 16"><rect x="0.700" y="0.700" width="9.800" height="14.600" fill="#fbf3d0" stroke="#000" stroke-width="1.100"/><path d="M6.300 2.300L16.300 8L6.300 13.700z" fill="#8c8484" stroke="#444" stroke-width=".4"/></svg><svg style="left:50px;top:69px" width="17" height="16" viewBox="0 0 17 16"><rect x="0.700" y="0.700" width="9.800" height="14.600" fill="#fbf3d0" stroke="#000" stroke-width="1.100"/><path d="M6.300 2.300L16.300 8L6.300 13.700z" fill="#e01010" stroke="#444" stroke-width=".4"/></svg><div class="a" style="left:0;top:91px;width:133px;height:1px;background:#aca899"></div><div class="a drawer" style="top:92px"><svg style="left:3px;top:4px" width="15" height="12" viewBox="0 0 15 12"><path d="M.5 10.500V2.500l1.500-1.500h4l1.500 1.500h4.500v2.500" fill="#fbe3a0" stroke="#c08a2a" stroke-width="1"/><path d="M.5 10.500l2.500-6h11.500l-2.500 6z" fill="#fde9b0" stroke="#c08a2a" stroke-width="1"/></svg><div class="t">Data Types</div></div><div class="a drawer" style="top:114px"><svg style="left:3px;top:4px" width="15" height="12" viewBox="0 0 15 12"><path d="M.5 10.500V2.500l1.500-1.500h4l1.500 1.500h4.500v2.500" fill="#fbe3a0" stroke="#c08a2a" stroke-width="1"/><path d="M.5 10.500l2.500-6h11.500l-2.500 6z" fill="#fde9b0" stroke="#c08a2a" stroke-width="1"/></svg><div class="t">Constants</div></div><div class="a drawer" style="top:136px"><svg style="left:3px;top:4px" width="15" height="12" viewBox="0 0 15 12"><path d="M.5 10.500V2.500l1.500-1.500h4l1.500 1.500h4.500v2.500" fill="#fbe3a0" stroke="#c08a2a" stroke-width="1"/><path d="M.5 10.500l2.500-6h11.500l-2.500 6z" fill="#fde9b0" stroke="#c08a2a" stroke-width="1"/></svg><div class="t">Formatted Data Types</div></div><div class="a drawer" style="top:158px"><svg style="left:3px;top:4px" width="15" height="12" viewBox="0 0 15 12"><path d="M.5 10.500V2.500l1.500-1.500h4l1.500 1.500h4.500v2.500" fill="#fbe3a0" stroke="#c08a2a" stroke-width="1"/><path d="M.5 10.500l2.500-6h11.500l-2.500 6z" fill="#fde9b0" stroke="#c08a2a" stroke-width="1"/></svg><div class="t" style="letter-spacing:-0.5px">Basic</div></div><div class="a drawer" style="top:180px"><svg style="left:3px;top:4px" width="15" height="12" viewBox="0 0 15 12"><path d="M.5 10.500V2.500l1.500-1.500h4l1.500 1.500h4.500v2.500" fill="#fbe3a0" stroke="#c08a2a" stroke-width="1"/><path d="M.5 10.500l2.500-6h11.500l-2.500 6z" fill="#fde9b0" stroke="#c08a2a" stroke-width="1"/></svg><div class="t" style="letter-spacing:-0.3px">Collections</div></div><div class="a drawer" style="top:202px"><svg style="left:3px;top:4px" width="15" height="12" viewBox="0 0 15 12"><path d="M.5 10.500V2.500l1.500-1.500h4l1.500 1.500h4.500v2.500" fill="#fbe3a0" stroke="#c08a2a" stroke-width="1"/><path d="M.5 10.500l2.500-6h11.500l-2.500 6z" fill="#fde9b0" stroke="#c08a2a" stroke-width="1"/></svg><div class="t">Database</div></div><div class="a drawer" style="top:224px"><svg style="left:3px;top:4px" width="15" height="12" viewBox="0 0 15 12"><path d="M.5 10.500V2.500l1.500-1.500h4l1.500 1.500h4.500v2.500" fill="#fbe3a0" stroke="#c08a2a" stroke-width="1"/><path d="M.5 10.500l2.500-6h11.500l-2.500 6z" fill="#fde9b0" stroke="#c08a2a" stroke-width="1"/></svg><div class="t">Dates</div></div><div class="a drawer" style="top:246px"><svg style="left:3px;top:4px" width="15" height="12" viewBox="0 0 15 12"><path d="M.5 10.500V2.500l1.500-1.500h4l1.500 1.500h4.500v2.500" fill="#fbe3a0" stroke="#c08a2a" stroke-width="1"/><path d="M.5 10.500l2.500-6h11.500l-2.500 6z" fill="#fde9b0" stroke="#c08a2a" stroke-width="1"/></svg><div class="t">Display</div></div><div class="a drawer" style="top:268px"><svg style="left:3px;top:4px" width="15" height="12" viewBox="0 0 15 12"><path d="M.5 10.500V2.500l1.500-1.500h4l1.500 1.500h4.500v2.500" fill="#fbe3a0" stroke="#c08a2a" stroke-width="1"/><path d="M.5 10.500l2.500-6h11.500l-2.500 6z" fill="#fde9b0" stroke="#c08a2a" stroke-width="1"/></svg><div class="t">Display Actions</div></div><div class="a drawer" style="top:290px"><svg style="left:3px;top:4px" width="15" height="12" viewBox="0 0 15 12"><path d="M.5 10.500V2.500l1.500-1.500h4l1.500 1.500h4.500v2.500" fill="#fbe3a0" stroke="#c08a2a" stroke-width="1"/><path d="M.5 10.500l2.500-6h11.500l-2.500 6z" fill="#fde9b0" stroke="#c08a2a" stroke-width="1"/></svg><div class="t" style="letter-spacing:-0.4px">Mobile</div></div><div class="a drawer" style="top:312px;background:linear-gradient(#f7f6f0,#efede2);border-bottom-color:#efede2"><svg style="left:3px;top:4px" width="15" height="12" viewBox="0 0 15 12"><path d="M.5 10.500V2.500l1.500-1.500h4l1.500 1.500h4.500v2.500" fill="#fbe3a0" stroke="#c08a2a" stroke-width="1"/><path d="M.5 10.500l2.500-6h11.500l-2.500 6z" fill="#fde9b0" stroke="#c08a2a" stroke-width="1"/></svg><div class="t">Flow Control</div></div><div class="a" style="left:0;top:333px;width:134px;height:1px;background:#fff"></div><svg style="left:7px;top:338px" width="13" height="16" viewBox="0 0 13 16"><path d="M1.500 .5L6 5.500M0 7.500H6.500M1.500 14.500L6 9.500" stroke="#9a6414" stroke-width="1" fill="none"/><path d="M6.300 5.800l-3-.6M6.300 5.800l-.6-3M6.300 9.200l-3 .6M6.300 9.200l-.6 3M6.800 7.500l-2.500-2M6.800 7.500l-2.500 2" stroke="#9a6414" stroke-width="1" fill="none"/><circle cx="9.800" cy="7.500" r="2.400" fill="#9a6414"/></svg><svg style="left:30px;top:338px" width="13" height="16" viewBox="0 0 13 16"><circle cx="2.600" cy="7.500" r="2.400" fill="#9a6414"/><path d="M5 7.500H9.500" stroke="#2a9a2a" stroke-width="1.400"/><path d="M8.800 4.800l3.600 2.700-3.600 2.700z" fill="#2a9a2a"/><path d="M4.500 5.5 L10 0.8" stroke="#9a5a30" stroke-width="1" fill="none"/><path d="M10.300 0.5 l-3.200 0.2 M10.300 0.5 l-.3 3" stroke="#9a5a30" stroke-width="1" fill="none"/><path d="M4.500 9.5 L10 14.2" stroke="#9a5a30" stroke-width="1" fill="none"/><path d="M10.300 14.5 l-3.200 -0.2 M10.300 14.5 l-.3 -3" stroke="#9a5a30" stroke-width="1" fill="none"/></svg><svg style="left:53px;top:338px" width="13" height="16" viewBox="0 0 13 16"><circle cx="2.600" cy="7.500" r="2.400" fill="#9a6414"/><path d="M5 7.500H9.500" stroke="#2a9a2a" stroke-width="1.400"/><path d="M8.800 4.800l3.600 2.700-3.600 2.700z" fill="#2a9a2a"/><path d="M4.500 5.5 L10 0.8" stroke="#4a4ab0" stroke-width="1" fill="none"/><path d="M10.300 0.5 l-3.200 0.2 M10.300 0.5 l-.3 3" stroke="#4a4ab0" stroke-width="1" fill="none"/><path d="M4.500 9.5 L10 14.2" stroke="#111" stroke-width="1" fill="none"/><path d="M10.300 14.5 l-3.200 -0.2 M10.300 14.5 l-.3 -3" stroke="#111" stroke-width="1" fill="none"/></svg><svg style="left:73px;top:341px" width="19" height="9" viewBox="0 0 19 9"><path d="M0 5.500h5" stroke="#000" stroke-width="1.800"/><path d="M11.500 5.500h4" stroke="#000" stroke-width="1.800"/><path d="M14.500 2.500l4 3-4 3z" fill="#000"/></svg><div class="t" style="left:79px;top:339px;font-weight:bold;font-size:12px">?</div><div class="a" style="left:0;top:369px;width:133px;height:1px;background:#aca899"></div><div class="a drawer" style="top:370px"><svg style="left:3px;top:4px" width="15" height="12" viewBox="0 0 15 12"><path d="M.5 10.500V2.500l1.500-1.500h4l1.500 1.500h4.500v2.500" fill="#fbe3a0" stroke="#c08a2a" stroke-width="1"/><path d="M.5 10.500l2.500-6h11.500l-2.500 6z" fill="#fde9b0" stroke="#c08a2a" stroke-width="1"/></svg><div class="t">Math</div></div><div class="a drawer" style="top:392px"><svg style="left:3px;top:4px" width="15" height="12" viewBox="0 0 15 12"><path d="M.5 10.500V2.500l1.500-1.500h4l1.500 1.500h4.500v2.500" fill="#fbe3a0" stroke="#c08a2a" stroke-width="1"/><path d="M.5 10.500l2.500-6h11.500l-2.500 6z" fill="#fde9b0" stroke="#c08a2a" stroke-width="1"/></svg><div class="t">Security</div></div><div class="a drawer" style="top:414px"><svg style="left:3px;top:4px" width="15" height="12" viewBox="0 0 15 12"><path d="M.5 10.500V2.500l1.500-1.500h4l1.500 1.500h4.500v2.500" fill="#fbe3a0" stroke="#c08a2a" stroke-width="1"/><path d="M.5 10.500l2.500-6h11.500l-2.500 6z" fill="#fde9b0" stroke="#c08a2a" stroke-width="1"/></svg><div class="t" style="letter-spacing:0.4px">Text</div></div><div class="a drawer" style="top:436px"><svg style="left:3px;top:4px" width="15" height="12" viewBox="0 0 15 12"><path d="M.5 10.500V2.500l1.500-1.500h4l1.500 1.500h4.500v2.500" fill="#fbe3a0" stroke="#c08a2a" stroke-width="1"/><path d="M.5 10.500l2.500-6h11.500l-2.500 6z" fill="#fde9b0" stroke="#c08a2a" stroke-width="1"/></svg><div class="t" style="letter-spacing:-0.35px">Miscellaneous</div></div><div class="a drawer" style="top:458px"><svg style="left:3px;top:4px" width="15" height="12" viewBox="0 0 15 12"><path d="M.5 10.500V2.500l1.500-1.500h4l1.500 1.500h4.500v2.500" fill="#fbe3a0" stroke="#c08a2a" stroke-width="1"/><path d="M.5 10.500l2.500-6h11.500l-2.500 6z" fill="#fde9b0" stroke="#c08a2a" stroke-width="1"/></svg><div class="t" style="letter-spacing:-0.35px">Modules</div></div><div class="a drawer" style="top:480px"><svg style="left:3px;top:4px" width="15" height="12" viewBox="0 0 15 12"><path d="M.5 10.500V2.500l1.500-1.500h4l1.500 1.500h4.500v2.500" fill="#fbe3a0" stroke="#c08a2a" stroke-width="1"/><path d="M.5 10.500l2.500-6h11.500l-2.500 6z" fill="#fde9b0" stroke="#c08a2a" stroke-width="1"/></svg><div class="t">Services</div></div><div class="a" style="left:133px;top:25px;width:17px;height:462px;background:linear-gradient(90deg,#f3f1ec,#fefefb 40%,#fefefb)"></div><div class="a" style="left:135px;top:53px;width:14px;height:388px;background:linear-gradient(90deg,#c6d6fb,#b4c8f6 60%,#aabff0);border-radius:2px;border:1px solid #a0b8f0"></div></div></div><div class="a" style="left:1122px;top:105px;width:1px;height:486px;background:#c5c2b2"></div><div class="a" style="left:1258px;top:131px;width:14px;height:14px;border:1px solid #b4c8f4;border-radius:2px;background:linear-gradient(135deg,#dce6fc,#b8cdf8)"></div><svg style="left:1257px;top:130px" width="16" height="16" viewBox="0 0 16 16"><path d="M4 9l4-4 4 4" fill="none" stroke="#4d6185" stroke-width="2"/></svg><div class="a" style="left:1258px;top:575px;width:14px;height:14px;border:1px solid #b4c8f4;border-radius:2px;background:linear-gradient(135deg,#dce6fc,#b8cdf8)"></div><svg style="left:1257px;top:574px" width="16" height="16" viewBox="0 0 16 16"><path d="M4 6l4 4 4-4" fill="none" stroke="#4d6185" stroke-width="2"/></svg><svg style="left:1261px;top:346px" width="8" height="8" viewBox="0 0 8 8"><path d="M0 .5h8M0 2.500h8M0 4.500h8M0 6.500h8" stroke="#eef4fe" stroke-width="1"/></svg><div class="a panel" style="left:256px;top:597px;width:1020px;height:143px"></div><svg style="left:258px;top:598px" width="1017" height="23" viewBox="0 0 1017 23"><path d="M-1 22.500H197M318 22.500H1017" stroke="#aca899"/><path d="M197 22.500V6C197 2 199 0 203 0H284C294 0 296 4 300 10S308 22 318 22.500V23H197z" fill="url(#lg1)" stroke="none"/><path d="M197.500 22V6C197.500 2 199 .5 203 .5H284C294 .5 296 4 300 10S308 22.500 318 22.500" fill="none" stroke="#aca899"/><path d="M120.500 1V22" stroke="#aca899"/></svg><svg style="left:260px;top:601px" width="16" height="16" viewBox="0 0 16 16"><path d="M1.500 6.500V2H5.500M10 1.800H14.500V5.500M4.700 8H7.500V12.500M10 14H14V10" fill="none" stroke="#18188a" stroke-width="1.200"/><rect x="5.200" y="0.600" width="4.600" height="3" fill="#d8d040" stroke="#000" stroke-width="1.100"/><rect x="0.600" y="6.400" width="4.200" height="3.200" fill="#7ee08a" stroke="#000" stroke-width="1.100"/><rect x="12.500" y="5.400" width="3" height="4.400" fill="#9ae8a0" stroke="#000" stroke-width="1.100"/><rect x="5.200" y="12.300" width="4.600" height="3.200" fill="#7ee08a" stroke="#000" stroke-width="1.100"/></svg><div class="t" style="left:279px;top:603px;letter-spacing:-.23px">Runtime Trace View</div><svg style="left:384px;top:603px" width="14" height="12" viewBox="0 0 14 12"><rect x="0.500" y="0.500" width="13" height="11" fill="#fff" stroke="#6a7890"/><rect x="1" y="1" width="12" height="2.500" fill="#8aa0d0"/><path d="M1 5.500h12M1 8h12M5 3.500v8" stroke="#9aa8c0" stroke-width=".8"/></svg><div class="t" style="left:402px;top:603px">Properties</div><svg style="left:459px;top:600px" width="18" height="17" viewBox="0 0 18 17"><path d="M1 4.500l3.800 4.500L12.500 1.200" fill="none" stroke="#1e86d8" stroke-width="2.200"/><path d="M8 8l8 8M16 8l-8 8" stroke="#f08a18" stroke-width="2.400"/></svg><div class="t" style="left:478px;top:603px">Validation</div><svg style="left:533px;top:604px" width="11" height="11" viewBox="0 0 11 11"><path d="M2 2L9 9M9 2L2 9" stroke="#7c7c7c" stroke-width="3.600" stroke-linecap="round"/><path d="M2 2L9 9M9 2L2 9" stroke="#fff" stroke-width="1.900" stroke-linecap="round"/></svg><svg style="left:1119px;top:601px" width="18" height="17" viewBox="0 0 18 17"><path d="M1 4.500l3.800 4.500L12.500 1.200" fill="none" stroke="#1e86d8" stroke-width="2.200"/><path d="M8 8l8 8M16 8l-8 8" stroke="#f08a18" stroke-width="2.400"/></svg><svg style="left:1144px;top:604px" width="16" height="11" viewBox="0 0 16 11"><rect x="0.700" y="0.700" width="14.600" height="9.600" fill="#fff" stroke="#2a8ae0" stroke-width="1.400"/><rect x="4" y="3.500" width="8" height="4" fill="#ffe8a0" stroke="#e0a020" stroke-width="1"/></svg><svg style="left:1169px;top:603px" width="14" height="13" viewBox="0 0 14 13"><rect x="0.500" y="0.500" width="5" height="4.500" fill="#f0a020" stroke="#000" stroke-width="1"/><path d="M3 5v5.500h5" stroke="#000" stroke-width="1.300" fill="none"/><rect x="8" y="8" width="5.500" height="4.500" fill="#30a0e0" stroke="#000" stroke-width="1"/></svg><svg style="left:1192px;top:601px" width="17" height="16" viewBox="0 0 17 16"><circle cx="4" cy="5" r="2.800" fill="none" stroke="#b8b8b0" stroke-width="1.200"/><circle cx="12.500" cy="5" r="2.800" fill="none" stroke="#b8b8b0" stroke-width="1.200"/><path d="M6.500 5h3.500M4 9l9 6M13 9l-9 6" stroke="#a8a8a0" stroke-width="1.600"/></svg><svg style="left:1217px;top:603px" width="16" height="9" viewBox="0 0 16 9"><circle cx="4" cy="5" r="3" fill="none" stroke="#b8b8b0" stroke-width="1.200"/><circle cx="12" cy="5" r="3" fill="none" stroke="#b8b8b0" stroke-width="1.200"/><path d="M7 4.500h2M1.500 2.500l1-2M14.500 2.500l-1-2" stroke="#b8b8b0" stroke-width="1"/></svg><div class="a" style="left:1241px;top:602px;width:10px;height:4px;border:1px solid #6a6a5a;background:#fff"></div><div class="a" style="left:1259px;top:602px;width:10px;height:10px;border:1px solid #6a6a5a;border-top-width:2px;background:#fff"></div><div class="a" style="left:269px;top:634px;width:163px;height:19px;background:#fff;border:1px solid #716f64;border-right-color:#fff;border-bottom-color:#fff;box-shadow:inset 1px 1px 0 #aca899"></div><div class="t" style="left:272px;top:637px">Errors+Unignored Warnings</div><div class="a" style="left:415px;top:636px;width:16px;height:16px;background:#ece9d8;border:1px solid #fff;border-right-color:#716f64;border-bottom-color:#716f64;box-shadow:inset -1px -1px 0 #aca899"></div><div class="a" style="left:419px;top:642px;width:0;height:0;border-left:4px solid transparent;border-right:4px solid transparent;border-top:4px solid #000"></div><div class="a" style="left:265px;top:659px;width:1002px;height:72px;background:#fff;border:1px solid #fff;border-top:2px solid #8a8777;border-left:2px solid #8a8777;overflow:hidden"><div class="a th" style="left:-1px;width:67px"><div class="t">Ignored</div></div><div class="a" style="left:65px;top:18px;width:1px;height:36px;background:#eeece0"></div><div class="a th" style="left:66px;width:150px"><div class="t">Root Model</div></div><div class="a" style="left:215px;top:18px;width:1px;height:36px;background:#eeece0"></div><div class="a th" style="left:216px;width:150px"><div class="t">Package Id</div></div><div class="a" style="left:365px;top:18px;width:1px;height:36px;background:#eeece0"></div><div class="a th" style="left:366px;width:175px"><div class="t">Problem</div></div><div class="a" style="left:540px;top:18px;width:1px;height:36px;background:#eeece0"></div><div class="a th" style="left:541px;width:350px"><div class="t">Details</div></div><div class="a" style="left:890px;top:18px;width:1px;height:36px;background:#eeece0"></div><div class="a th" style="left:891px;width:110px"><div class="t">Location</div></div><div class="a" style="left:1000px;top:18px;width:1px;height:36px;background:#eeece0"></div><div class="a" style="left:0;top:32px;width:1002px;height:1px;background:#eeece0"></div><div class="a" style="left:0;top:46px;width:1002px;height:1px;background:#eeece0"></div><div class="a" style="left:0;top:52px;width:1002px;height:17px;background:linear-gradient(#f3f1ec,#fefefb 40%,#fefefb)"></div><div class="a" style="left:17px;top:53px;width:926px;height:15px;background:linear-gradient(#c8d8fc,#b8ccf8 60%,#aec2f2);border:1px solid #a0b8f0;border-radius:2px"></div></div><div class="a" style="left:267px;top:714px;width:15px;height:15px;border:1px solid #b4c8f4;border-radius:2px;background:linear-gradient(135deg,#dce6fc,#b8cdf8)"></div><svg style="left:266.5px;top:713.5px" width="16" height="16" viewBox="0 0 16 16"><path d="M9 4l-4 4 4 4" fill="none" stroke="#4d6185" stroke-width="2"/></svg><div class="a" style="left:1249px;top:714px;width:15px;height:15px;border:1px solid #b4c8f4;border-radius:2px;background:linear-gradient(135deg,#dce6fc,#b8cdf8)"></div><svg style="left:1248.5px;top:713.5px" width="16" height="16" viewBox="0 0 16 16"><path d="M6 4l4 4-4 4" fill="none" stroke="#4d6185" stroke-width="2"/></svg><svg style="left:741px;top:718px" width="8" height="8" viewBox="0 0 8 8"><path d="M.5 0v8M2.500 0v8M4.500 0v8M6.500 0v8" stroke="#eef4fe" stroke-width="1"/></svg><div class="a" style="left:5px;top:745px;width:2px;height:19px;border-left:1px solid #fff;border-right:1px solid #aca899"></div><svg style="left:16px;top:746px" width="15" height="14" viewBox="0 0 15 14"><rect x="0.500" y="2.500" width="5" height="10" fill="#fff" stroke="#707888"/><rect x="1" y="3" width="4" height="2" fill="#4a7ac8"/><path d="M10.500 0v2M10.500 4.500v2M7.500 3.200h2M11.500 3.200h2" stroke="#d9a010" stroke-width="1.100"/><rect x="9.500" y="2.200" width="2" height="2" fill="#ffe680" stroke="#d9a010" stroke-width=".5"/></svg><div class="a" style="left:1029px;top:745px;width:2px;height:19px;border-left:1px solid #aca899;border-right:1px solid #fff"></div><div class="a" style="left:0;top:770px;width:1280px;height:30px;background:linear-gradient(#3a80f0 0,#2a6ae8 2px,#2460e0 5px,#245edc 18px,#2058d0 26px,#1a48b8 30px)"></div><div class="a" style="left:0;top:770px;width:110px;height:30px;overflow:hidden"><div class="a" style="left:-4px;top:0;width:100px;height:30px;border-radius:0 9px 9px 0/0 15px 15px 0;background:linear-gradient(#2c7c2c 0,#62b462 1px,#58ac58 2px,#46a046 4px,#3c983c 8px,#379337 14px,#348f34 20px,#2e862e 25px,#256f25 28px,#1f5f1f 30px);box-shadow:2px 0 3px #12307c,inset 6px 0 6px -3px #5cae5c"></div></div><svg style="left:9px;top:774px" width="21" height="20" viewBox="0 0 17 16"><path d="M2 3c2-1.500 4-1.500 6.500 0l-1.200 5c-2.300-1.300-4.300-1.300-6.300 0z" fill="#e8502a"/><path d="M9.500 3.500c2.300 1.300 4.500 1.300 6.800 0l-1.300 5c-2.300 1.300-4.400 1.300-6.700 0z" fill="#7ac040"/><path d="M.8 9.500c2-1.300 4-1.300 6.300 0l-1.300 5c-2.300-1.300-4.300-1.300-6.300 0z" fill="#4a8ae8"/><path d="M8 10c2.300 1.300 4.400 1.300 6.700 0l-1.300 5c-2.300 1.300-4.400 1.300-6.700 0z" fill="#f8c830"/></svg><div class="t" style="left:34px;top:773px;font-size:18px;font-weight:bold;font-style:italic;color:#fff;line-height:22px;height:22px;text-shadow:1px 1px 1px #1a4a1a;letter-spacing:-.3px">start</div><svg style="left:110px;top:776px" width="17" height="17" viewBox="0 0 17 17"><path d="M3 12c-3 4 2 5 8-1M14 4c3-4-2-5-8 1" fill="none" stroke="#f0c030" stroke-width="1.400"/><circle cx="8.500" cy="8.500" r="5.500" fill="none" stroke="#3a9af8" stroke-width="2.600"/><path d="M4 8.500h9" stroke="#3a9af8" stroke-width="2"/></svg><svg style="left:132px;top:776px" width="16" height="16" viewBox="0 0 16 16"><rect x="1" y="1" width="14" height="14" rx="3" fill="#d8e8fc" stroke="#1a4aa8" stroke-width="1.400"/><path d="M4 8a4 4 0 0 1 8 0M8 4v8M4.500 8h7" stroke="#1a4aa8" stroke-width="1.600" fill="none"/><path d="M10 3l4-1-1 4z" fill="#e03020"/></svg><svg style="left:156px;top:776px" width="16" height="16" viewBox="0 0 16 16"><circle cx="8" cy="8" r="7.500" fill="#e03a2a"/><path d="M8 8L1.500 4.200A7.500 7.500 0 0 0 5 14.900z" fill="#2aa048"/><path d="M8 8L5 14.900A7.500 7.500 0 0 0 14.500 4.200z" fill="#f8c820"/><path d="M8 8L14.500 4.200H8z" fill="#e03a2a"/><circle cx="8" cy="8" r="3.500" fill="#fff"/><circle cx="8" cy="8" r="2.600" fill="#3a7ae0"/></svg><div class="t" style="left:182px;top:769px;font-size:14px;color:#c8dcff;letter-spacing:-1px">»</div><div class="a tb" style="left:199px;width:158px;background:linear-gradient(#5090f4 0,#3c80ee 3px,#3878ea 50%,#2e6ee0);box-shadow:inset 0 1px 0 #78b0ff"></div><svg style="left:208px;top:777px" width="16" height="16" viewBox="0 0 16 16"><circle cx="8" cy="8" r="7.500" fill="#e03a2a"/><path d="M8 8L1.500 4.200A7.500 7.500 0 0 0 5 14.900z" fill="#2aa048"/><path d="M8 8L5 14.900A7.500 7.500 0 0 0 14.500 4.200z" fill="#f8c820"/><path d="M8 8L14.500 4.200H8z" fill="#e03a2a"/><circle cx="8" cy="8" r="3.500" fill="#fff"/><circle cx="8" cy="8" r="2.600" fill="#3a7ae0"/></svg><div class="t" style="left:227px;top:779px;color:#fff;letter-spacing:.07px">localhost:8080/Guest...</div><div class="a tb" style="left:359px;width:158px;background:linear-gradient(#5090f4 0,#3c80ee 3px,#3878ea 50%,#2e6ee0);box-shadow:inset 0 1px 0 #78b0ff"></div><svg style="left:368px;top:777px" width="16" height="16" viewBox="0 0 16 16"><circle cx="8" cy="8" r="7.500" fill="#e03a2a"/><path d="M8 8L1.500 4.200A7.500 7.500 0 0 0 5 14.900z" fill="#2aa048"/><path d="M8 8L5 14.900A7.500 7.500 0 0 0 14.500 4.200z" fill="#f8c820"/><path d="M8 8L14.500 4.200H8z" fill="#e03a2a"/><circle cx="8" cy="8" r="3.500" fill="#fff"/><circle cx="8" cy="8" r="2.600" fill="#3a7ae0"/></svg><div class="t" style="left:387px;top:779px;color:#fff">Tersus: Home - Googl...</div><div class="a tb" style="left:519px;width:158px;background:linear-gradient(#1c50b8,#1a4ab0 50%,#1e52bc);box-shadow:inset 1px 1px 1px #12347a"></div><svg style="left:528px;top:777px" width="18" height="18" viewBox="0 0 18 18"><rect x="4.500" y="1.500" width="7" height="7.500" fill="#3a7a40" stroke="#000" stroke-width="1"/><circle cx="3.800" cy="6.500" r="3.300" fill="#f2e68a" stroke="#000" stroke-width="1"/><path d="M6 12.500h6v-2l3.500 2.800-3.500 2.800v-2h-6z" fill="#7adcf0" stroke="#000" stroke-width=".9"/></svg><div class="t" style="left:547px;top:779px;color:#fff">Tersus Debugging - G...</div><div class="a" style="left:791px;top:774px;width:172px;height:21px;background:#fff;border:1px solid #7a96c8"></div><div class="t" style="left:796px;top:777px;color:#8a8a8a">Search Desktop</div><div class="a" style="left:964px;top:774px;width:25px;height:21px;background:linear-gradient(#f8f8f4,#d8dce8);border:1px solid #7a96c8;border-radius:0 3px 3px 0"></div><svg style="left:970px;top:777px" width="14" height="14" viewBox="0 0 14 14"><circle cx="8.500" cy="5.500" r="4" fill="#d8ecfc" stroke="#2a5ab8" stroke-width="1.500"/><path d="M5.500 8.500l-4 4" stroke="#2a5ab8" stroke-width="2.200"/></svg><div class="t" style="left:1006px;top:778px;color:#fff">EN</div><div class="a" style="left:1030px;top:777px;width:13px;height:14px;background:#f8f4d0;border:1px solid #000"></div><div class="t" style="left:1033px;top:777px;font-weight:bold;font-size:11px">?</div><svg style="left:1053px;top:776px" width="10" height="16" viewBox="0 0 10 16"><rect x="3" y="1" width="6" height="4" fill="none" stroke="#fff" stroke-width="1"/><rect x="1" y="3.500" width="5" height="3.500" fill="#2460e0" stroke="#fff" stroke-width="1"/><path d="M2.500 11.500h5l-2.500 3z" fill="#fff"/></svg><div class="a" style="left:1080px;top:770px;width:200px;height:30px;background:linear-gradient(#1ea0f0 0,#18a0ec 2px,#1290e6 6px,#1088e2 20px,#0e7ad4 27px,#0c68b8 30px);border-left:1px solid #0a3a90"></div><div class="a" style="left:1070px;top:776px;width:18px;height:18px;border-radius:9px;background:radial-gradient(circle at 35% 35%,#6ac0ff,#1a70e0 70%);border:1px solid #a8d8ff"></div><svg style="left:1075px;top:781px" width="8" height="9" viewBox="0 0 8 9"><path d="M6 .8L2 4.500l4 3.700" fill="none" stroke="#fff" stroke-width="2"/></svg><svg style="left:1092px;top:777px" width="16" height="16" viewBox="0 0 16 16"><rect x="1" y="2" width="9" height="7" fill="#9ab0d0" stroke="#223" stroke-width="1"/><rect x="5" y="5" width="9" height="7" fill="#5a78b0" stroke="#223" stroke-width="1"/><path d="M8 9l6 6M14 9l-6 6" stroke="#e02020" stroke-width="1.800"/></svg><svg style="left:1110px;top:777px" width="15" height="15" viewBox="0 0 15 15"><circle cx="6" cy="6" r="4.500" fill="#c0c0c0" stroke="#505050" stroke-width="1.200"/><circle cx="10" cy="10" r="3.500" fill="#e8e8e8" stroke="#d02020" stroke-width="1.400"/><path d="M7.800 7.800l4.400 4.400" stroke="#d02020" stroke-width="1.200"/></svg><svg style="left:1128px;top:777px" width="16" height="16" viewBox="0 0 16 16"><circle cx="9.500" cy="6" r="4.500" fill="#e8f4ff" stroke="#a0c0e0" stroke-width="1.400"/><path d="M6 9.500l-5 5" stroke="#c0d8f0" stroke-width="2.400"/></svg><div class="t" style="left:1146px;top:773px;font-size:7px;font-weight:bold;color:#102040;line-height:8px;height:8px;letter-spacing:.2px">TPM</div><svg style="left:1147px;top:781px" width="12" height="12" viewBox="0 0 12 12"><rect x="0.500" y="2" width="8" height="9" fill="#d8d8d0" stroke="#404040" stroke-width=".8"/><circle cx="8" cy="7" r="3.500" fill="#20a020" stroke="#fff" stroke-width=".8"/><path d="M8 5v4" stroke="#fff" stroke-width="1.300"/></svg><svg style="left:1162px;top:778px" width="15" height="15" viewBox="0 0 15 15"><circle cx="7.500" cy="7.500" r="7" fill="#101010" stroke="#404040" stroke-width="1"/><path d="M2 8h3l1.500-2.500 2 4 1.500-2.500h3" fill="none" stroke="#20e040" stroke-width="1.100"/><path d="M2.500 5.500c3-3 7-3 10 0" stroke="#e04080" fill="none" stroke-width="1"/></svg><svg style="left:1181px;top:777px" width="16" height="16" viewBox="0 0 16 16"><path d="M1 5c4-5 10-5 14 0" fill="none" stroke="#30e030" stroke-width="2"/><path d="M3.500 8c3-3.500 6-3.500 9 0" fill="none" stroke="#30e030" stroke-width="2"/><path d="M6 11c1.500-2 2.500-2 4 0" fill="none" stroke="#30e030" stroke-width="2"/><circle cx="8" cy="14" r="1.600" fill="#30e030"/></svg><svg style="left:1199px;top:777px" width="14" height="16" viewBox="0 0 14 16"><path d="M1 1h11v8c0 3-3 5-5.500 6c-2.500-1-5.500-3-5.500-6z" fill="#f0d040" stroke="#806010" stroke-width="1"/><path d="M6.500 1v14" stroke="#806010" stroke-width="1"/><circle cx="10.500" cy="12" r="2.800" fill="#30c030" stroke="#fff" stroke-width=".7"/></svg><div class="t" style="left:1220px;top:778px;color:#fff">10:34 AM</div></body></html>
